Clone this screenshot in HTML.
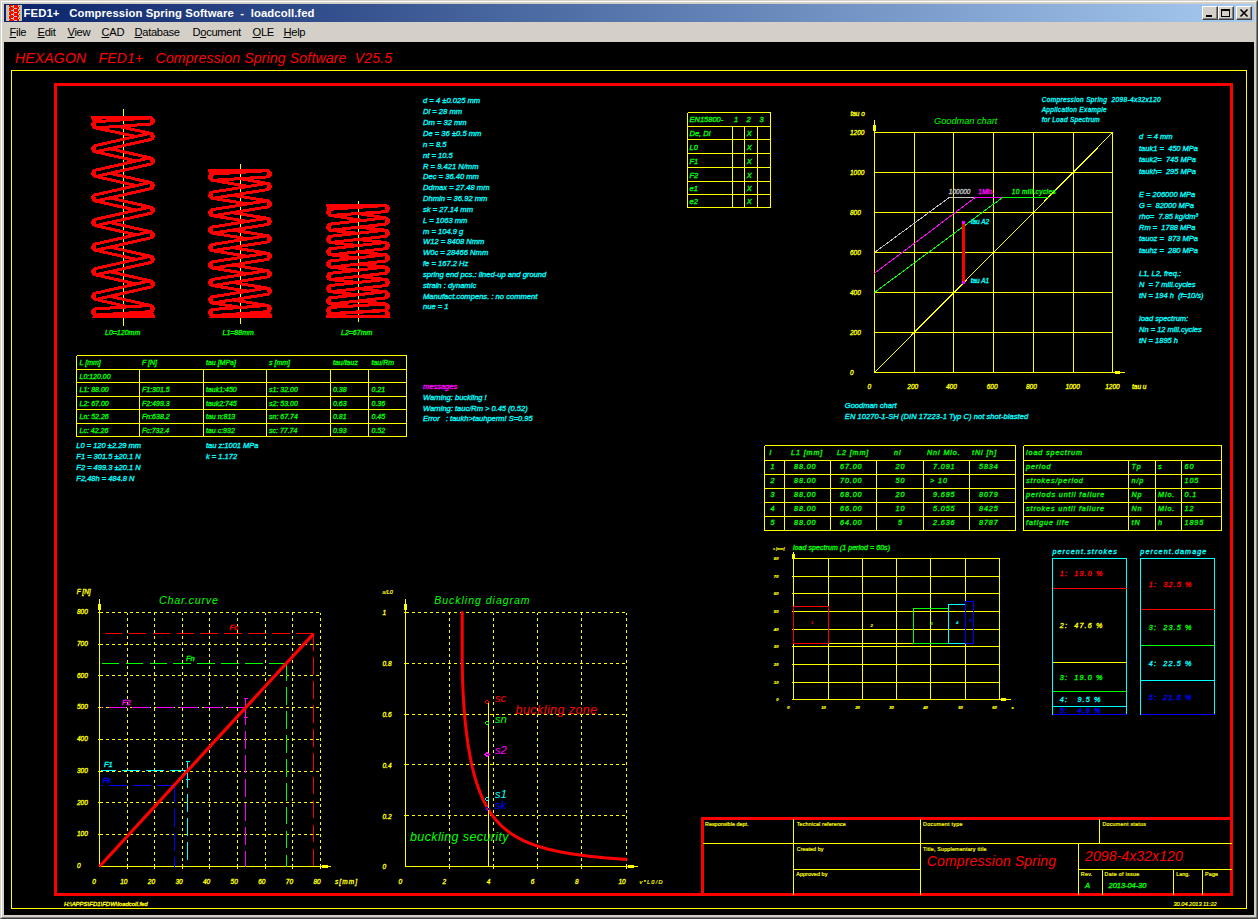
<!DOCTYPE html>
<html><head><meta charset="utf-8"><title>FED1+ Compression Spring Software - loadcoll.fed</title>
<style>
html,body{margin:0;padding:0;}
body{width:1258px;height:919px;overflow:hidden;background:#d4d0c8;position:relative;font-family:"Liberation Sans", sans-serif;}
#win{position:absolute;left:0;top:0;width:1256px;height:917px;border-top:1px solid #d4d0c8;border-left:1px solid #d4d0c8;border-right:1px solid #404040;border-bottom:1px solid #404040;}
#win2{position:absolute;left:1px;top:1px;width:1254px;height:915px;border-top:1px solid #fff;border-left:1px solid #fff;border-right:1px solid #808080;border-bottom:1px solid #808080;}
#title{position:absolute;left:4px;top:4px;width:1250px;height:18px;background:linear-gradient(to right,#0a246a 0%,#a6caf0 100%);}
#ttext{position:absolute;left:23.5px;top:4px;height:18px;line-height:18px;color:#fff;font-weight:bold;font-size:11.3px;white-space:pre;letter-spacing:0.1px;}
#menu{position:absolute;left:4px;top:22px;width:1250px;height:20px;background:#d4d0c8;}
.mi{position:absolute;top:23px;height:18px;line-height:18px;font-size:11.2px;color:#000;white-space:pre;letter-spacing:-0.33px;}
.mi u{text-decoration:underline;text-underline-offset:1px;}
#canvas{position:absolute;left:4px;top:42px;width:1250px;height:873px;background:#000;}
.btn{position:absolute;top:6px;width:14px;height:12px;background:#d4d0c8;border:1px solid;border-color:#fff #404040 #404040 #fff;box-shadow:inset -1px -1px 0 #808080;}
svg{position:absolute;left:0;top:0;}
svg text{font-family:"Liberation Sans", sans-serif;font-style:italic;}
</style></head><body>
<div id="win"></div><div id="win2"></div>
<div id="title"></div>
<svg width="22" height="22" viewBox="0 0 22 22" shape-rendering="crispEdges">
<rect x="6" y="5" width="16" height="16" fill="#c0c0c0"/><rect x="8" y="5" width="10" height="1" fill="#ff0000"/><rect x="8" y="5" width="1" height="1" fill="#ffff00"/><rect x="13" y="5" width="1" height="1" fill="#ffff00"/><rect x="9" y="6" width="11" height="1" fill="#ff0000"/><rect x="18" y="6" width="1" height="1" fill="#ffff00"/><rect x="11" y="6" width="3" height="1" fill="#a8c8c8"/><rect x="10" y="7" width="10" height="1" fill="#ff0000"/><rect x="13" y="7" width="1" height="1" fill="#ffff00"/><rect x="19" y="7" width="1" height="1" fill="#ffff00"/><rect x="8" y="8" width="11" height="1" fill="#ff0000"/><rect x="8" y="8" width="1" height="1" fill="#ffff00"/><rect x="14" y="8" width="3" height="1" fill="#a8c8c8"/><rect x="8" y="9" width="10" height="1" fill="#ff0000"/><rect x="8" y="9" width="1" height="1" fill="#ffff00"/><rect x="13" y="9" width="1" height="1" fill="#ffff00"/><rect x="9" y="10" width="11" height="1" fill="#ff0000"/><rect x="18" y="10" width="1" height="1" fill="#ffff00"/><rect x="11" y="10" width="3" height="1" fill="#a8c8c8"/><rect x="10" y="11" width="10" height="1" fill="#ff0000"/><rect x="13" y="11" width="1" height="1" fill="#ffff00"/><rect x="19" y="11" width="1" height="1" fill="#ffff00"/><rect x="8" y="12" width="11" height="1" fill="#ff0000"/><rect x="8" y="12" width="1" height="1" fill="#ffff00"/><rect x="14" y="12" width="3" height="1" fill="#a8c8c8"/><rect x="8" y="13" width="10" height="1" fill="#ff0000"/><rect x="8" y="13" width="1" height="1" fill="#ffff00"/><rect x="13" y="13" width="1" height="1" fill="#ffff00"/><rect x="9" y="14" width="11" height="1" fill="#ff0000"/><rect x="18" y="14" width="1" height="1" fill="#ffff00"/><rect x="11" y="14" width="3" height="1" fill="#a8c8c8"/><rect x="10" y="15" width="10" height="1" fill="#ff0000"/><rect x="13" y="15" width="1" height="1" fill="#ffff00"/><rect x="19" y="15" width="1" height="1" fill="#ffff00"/><rect x="8" y="16" width="11" height="1" fill="#ff0000"/><rect x="8" y="16" width="1" height="1" fill="#ffff00"/><rect x="14" y="16" width="3" height="1" fill="#a8c8c8"/><rect x="8" y="17" width="10" height="1" fill="#ff0000"/><rect x="8" y="17" width="1" height="1" fill="#ffff00"/><rect x="13" y="17" width="1" height="1" fill="#ffff00"/><rect x="9" y="18" width="11" height="1" fill="#ff0000"/><rect x="18" y="18" width="1" height="1" fill="#ffff00"/><rect x="11" y="18" width="3" height="1" fill="#a8c8c8"/><rect x="10" y="19" width="10" height="1" fill="#ff0000"/><rect x="13" y="19" width="1" height="1" fill="#ffff00"/><rect x="19" y="19" width="1" height="1" fill="#ffff00"/><rect x="8" y="20" width="11" height="1" fill="#ff0000"/><rect x="8" y="20" width="1" height="1" fill="#ffff00"/><rect x="14" y="20" width="3" height="1" fill="#a8c8c8"/>
</svg>
<div id="ttext">FED1+   Compression Spring Software  -  loadcoll.fed</div>
<div class="btn" style="left:1202px"></div><div class="btn" style="left:1218px"></div><div class="btn" style="left:1236px"></div>
<svg width="1258" height="24" viewBox="0 0 1258 24" shape-rendering="crispEdges">
<rect x="1206" y="15" width="6" height="2" fill="#000"/>
<rect x="1221.5" y="9.500" width="8" height="7" fill="none" stroke="#000"/><rect x="1221" y="9" width="9" height="2" fill="#000"/>
<path d="M1240.500 9.500 L1247.500 16.500 M1247.500 9.500 L1240.500 16.500" stroke="#000" stroke-width="1.600" shape-rendering="geometricPrecision"/>
</svg>
<div id="menu"></div>
<span class="mi" style="left:9.5px"><u>F</u>ile</span><span class="mi" style="left:37.5px"><u>E</u>dit</span><span class="mi" style="left:67.5px"><u>V</u>iew</span><span class="mi" style="left:101.5px"><u>C</u>AD</span><span class="mi" style="left:134.5px"><u>D</u>atabase</span><span class="mi" style="left:192.5px">D<u>o</u>cument</span><span class="mi" style="left:252.5px"><u>O</u>LE</span><span class="mi" style="left:283.5px"><u>H</u>elp</span>
<div id="canvas"></div>
<svg width="1258" height="919" viewBox="0 0 1258 919" shape-rendering="crispEdges">
<rect x="11.5" y="70.5" width="1235.0" height="838.0" stroke="#ffff00" stroke-width="1" fill="none"/>
<rect x="55.5" y="84.5" width="1176.0" height="810.0" stroke="#ff0000" stroke-width="3" fill="none"/>
<text x="15.0" y="63.0" fill="#ff0000" stroke="#ff0000" stroke-width="0.00" font-size="14.00" textLength="377.0" lengthAdjust="spacing" xml:space="preserve">HEXAGON   FED1+   Compression Spring Software  V25.5</text>
<text x="64.0" y="906.0" fill="#ffff00" stroke="#ffff00" stroke-width="0.32" font-size="6.00" textLength="83.7" lengthAdjust="spacing" xml:space="preserve">H:\APPS\FD1\FDW\loadcoll.fed</text>
<text x="1173.5" y="906.2" fill="#ffff00" stroke="#ffff00" stroke-width="0.20" font-size="5.60" textLength="43.2" lengthAdjust="spacing" xml:space="preserve">30.04.2013 11:22</text>
<line x1="123.5" y1="109.0" x2="123.5" y2="326.0" stroke="#ffff00" stroke-width="1"/>
<clipPath id="c123"><rect x="83.5" y="116.0" width="80" height="202.0"/></clipPath>
<g clip-path="url(#c123)" fill="none">
<mask id="mbc123" maskUnits="userSpaceOnUse" x="78.5" y="106.0" width="90" height="222.0"><rect x="78.5" y="106.0" width="90" height="222.0" fill="#fff"/><path d="M95.8 117.5L150.3 121.0M95.8 124.8L150.3 136.4M95.8 148.7L150.3 161.0M95.8 173.3L150.3 185.6M95.8 197.9L150.3 210.2M95.8 222.5L150.3 234.8M95.8 247.1L150.3 259.4M95.8 271.7L150.3 284.0M95.8 296.3L150.3 308.6M95.8 312.0L150.3 316.5" stroke="#000" stroke-width="3.2" stroke-linecap="butt"/><path d="M150.3 121.0L95.8 124.8M150.3 136.4L95.8 148.7M150.3 161.0L95.8 173.3M150.3 185.6L95.8 197.9M150.3 210.2L95.8 222.5M150.3 234.8L95.8 247.1M150.3 259.4L95.8 271.7M150.3 284.0L95.8 296.3M150.3 308.6L95.8 312.0M150.3 316.5L95.8 320.0" stroke="#000" stroke-width="9.2" stroke-linecap="round"/></mask>
<mask id="mfc123" maskUnits="userSpaceOnUse" x="78.5" y="106.0" width="90" height="222.0"><rect x="78.5" y="106.0" width="90" height="222.0" fill="#fff"/><path d="M150.3 121.0L95.8 124.8M150.3 136.4L95.8 148.7M150.3 161.0L95.8 173.3M150.3 185.6L95.8 197.9M150.3 210.2L95.8 222.5M150.3 234.8L95.8 247.1M150.3 259.4L95.8 271.7M150.3 284.0L95.8 296.3M150.3 308.6L95.8 312.0M150.3 316.5L95.8 320.0" stroke="#000" stroke-width="3.2" stroke-linecap="butt"/></mask>
<path d="M95.8 117.5L150.3 121.0M95.8 124.8L150.3 136.4M95.8 148.7L150.3 161.0M95.8 173.3L150.3 185.6M95.8 197.9L150.3 210.2M95.8 222.5L150.3 234.8M95.8 247.1L150.3 259.4M95.8 271.7L150.3 284.0M95.8 296.3L150.3 308.6M95.8 312.0L150.3 316.5" stroke="#ff0000" stroke-width="9.2" stroke-linecap="round" mask="url(#mbc123)"/>
<path d="M150.3 121.0L95.8 124.8M150.3 136.4L95.8 148.7M150.3 161.0L95.8 173.3M150.3 185.6L95.8 197.9M150.3 210.2L95.8 222.5M150.3 234.8L95.8 247.1M150.3 259.4L95.8 271.7M150.3 284.0L95.8 296.3M150.3 308.6L95.8 312.0M150.3 316.5L95.8 320.0" stroke="#ff0000" stroke-width="9.2" stroke-linecap="round" mask="url(#mfc123)"/>
</g>
<line x1="91.5" y1="117.5" x2="151.5" y2="117.5" stroke="#ff0000" stroke-width="3"/>
<line x1="94.5" y1="316.5" x2="154.5" y2="316.5" stroke="#ff0000" stroke-width="3"/>
<text x="105.0" y="334.5" fill="#00ff00" stroke="#00ff00" stroke-width="0.32" font-size="7.00" xml:space="preserve">L0=120mm</text>
<line x1="240.5" y1="164.0" x2="240.5" y2="324.0" stroke="#ffff00" stroke-width="1"/>
<clipPath id="c240"><rect x="200.5" y="169.0" width="80" height="149.0"/></clipPath>
<g clip-path="url(#c240)" fill="none">
<mask id="mbc240" maskUnits="userSpaceOnUse" x="195.5" y="159.0" width="90" height="169.0"><rect x="195.5" y="159.0" width="90" height="169.0" fill="#fff"/><path d="M212.8 170.5L267.3 173.8M212.8 177.2L267.3 186.5M212.8 195.2L267.3 203.9M212.8 212.7L267.3 221.4M212.8 230.1L267.3 238.8M212.8 247.6L267.3 256.3M212.8 265.0L267.3 273.8M212.8 282.5L267.3 291.2M212.8 299.9L267.3 308.6M212.8 312.6L267.3 316.2" stroke="#000" stroke-width="3.2" stroke-linecap="butt"/><path d="M267.3 173.8L212.8 177.2M267.3 186.5L212.8 195.2M267.3 203.9L212.8 212.7M267.3 221.4L212.8 230.1M267.3 238.8L212.8 247.6M267.3 256.3L212.8 265.0M267.3 273.8L212.8 282.5M267.3 291.2L212.8 299.9M267.3 308.6L212.8 312.6M267.3 316.2L212.8 320.0" stroke="#000" stroke-width="9.2" stroke-linecap="round"/></mask>
<mask id="mfc240" maskUnits="userSpaceOnUse" x="195.5" y="159.0" width="90" height="169.0"><rect x="195.5" y="159.0" width="90" height="169.0" fill="#fff"/><path d="M267.3 173.8L212.8 177.2M267.3 186.5L212.8 195.2M267.3 203.9L212.8 212.7M267.3 221.4L212.8 230.1M267.3 238.8L212.8 247.6M267.3 256.3L212.8 265.0M267.3 273.8L212.8 282.5M267.3 291.2L212.8 299.9M267.3 308.6L212.8 312.6M267.3 316.2L212.8 320.0" stroke="#000" stroke-width="3.2" stroke-linecap="butt"/></mask>
<path d="M212.8 170.5L267.3 173.8M212.8 177.2L267.3 186.5M212.8 195.2L267.3 203.9M212.8 212.7L267.3 221.4M212.8 230.1L267.3 238.8M212.8 247.6L267.3 256.3M212.8 265.0L267.3 273.8M212.8 282.5L267.3 291.2M212.8 299.9L267.3 308.6M212.8 312.6L267.3 316.2" stroke="#ff0000" stroke-width="9.2" stroke-linecap="round" mask="url(#mbc240)"/>
<path d="M267.3 173.8L212.8 177.2M267.3 186.5L212.8 195.2M267.3 203.9L212.8 212.7M267.3 221.4L212.8 230.1M267.3 238.8L212.8 247.6M267.3 256.3L212.8 265.0M267.3 273.8L212.8 282.5M267.3 291.2L212.8 299.9M267.3 308.6L212.8 312.6M267.3 316.2L212.8 320.0" stroke="#ff0000" stroke-width="9.2" stroke-linecap="round" mask="url(#mfc240)"/>
</g>
<line x1="208.5" y1="170.5" x2="268.5" y2="170.5" stroke="#ff0000" stroke-width="3"/>
<line x1="211.5" y1="316.5" x2="271.5" y2="316.5" stroke="#ff0000" stroke-width="3"/>
<text x="222.5" y="334.5" fill="#00ff00" stroke="#00ff00" stroke-width="0.32" font-size="7.00" xml:space="preserve">L1=88mm</text>
<line x1="358.5" y1="200.5" x2="358.5" y2="322.0" stroke="#ffff00" stroke-width="1"/>
<clipPath id="c358"><rect x="318.5" y="204.0" width="80" height="114.0"/></clipPath>
<g clip-path="url(#c358)" fill="none">
<mask id="mbc358" maskUnits="userSpaceOnUse" x="313.5" y="194.0" width="90" height="134.0"><rect x="313.5" y="194.0" width="90" height="134.0" fill="#fff"/><path d="M330.8 205.5L385.3 208.6M330.8 212.3L385.3 221.0M330.8 227.2L385.3 233.3M330.8 239.4L385.3 245.6M330.8 251.8L385.3 257.9M330.8 264.1L385.3 270.2M330.8 276.4L385.3 282.5M330.8 288.6L385.3 294.8M330.8 300.9L385.3 307.1M330.8 310.5L385.3 313.8M330.8 317.0L385.3 320.0" stroke="#000" stroke-width="3.2" stroke-linecap="butt"/><path d="M385.3 208.6L330.8 212.3M385.3 221.0L330.8 227.2M385.3 233.3L330.8 239.4M385.3 245.6L330.8 251.8M385.3 257.9L330.8 264.1M385.3 270.2L330.8 276.4M385.3 282.5L330.8 288.6M385.3 294.8L330.8 300.9M385.3 307.1L330.8 310.5M385.3 313.8L330.8 317.0" stroke="#000" stroke-width="9.2" stroke-linecap="round"/></mask>
<mask id="mfc358" maskUnits="userSpaceOnUse" x="313.5" y="194.0" width="90" height="134.0"><rect x="313.5" y="194.0" width="90" height="134.0" fill="#fff"/><path d="M385.3 208.6L330.8 212.3M385.3 221.0L330.8 227.2M385.3 233.3L330.8 239.4M385.3 245.6L330.8 251.8M385.3 257.9L330.8 264.1M385.3 270.2L330.8 276.4M385.3 282.5L330.8 288.6M385.3 294.8L330.8 300.9M385.3 307.1L330.8 310.5M385.3 313.8L330.8 317.0" stroke="#000" stroke-width="3.2" stroke-linecap="butt"/></mask>
<path d="M330.8 205.5L385.3 208.6M330.8 212.3L385.3 221.0M330.8 227.2L385.3 233.3M330.8 239.4L385.3 245.6M330.8 251.8L385.3 257.9M330.8 264.1L385.3 270.2M330.8 276.4L385.3 282.5M330.8 288.6L385.3 294.8M330.8 300.9L385.3 307.1M330.8 310.5L385.3 313.8M330.8 317.0L385.3 320.0" stroke="#ff0000" stroke-width="9.2" stroke-linecap="round" mask="url(#mbc358)"/>
<path d="M385.3 208.6L330.8 212.3M385.3 221.0L330.8 227.2M385.3 233.3L330.8 239.4M385.3 245.6L330.8 251.8M385.3 257.9L330.8 264.1M385.3 270.2L330.8 276.4M385.3 282.5L330.8 288.6M385.3 294.8L330.8 300.9M385.3 307.1L330.8 310.5M385.3 313.8L330.8 317.0" stroke="#ff0000" stroke-width="9.2" stroke-linecap="round" mask="url(#mfc358)"/>
</g>
<line x1="326.5" y1="205.5" x2="386.5" y2="205.5" stroke="#ff0000" stroke-width="3"/>
<line x1="329.5" y1="316.5" x2="389.5" y2="316.5" stroke="#ff0000" stroke-width="3"/>
<text x="341.0" y="334.5" fill="#00ff00" stroke="#00ff00" stroke-width="0.32" font-size="7.00" xml:space="preserve">L2=67mm</text>
<text x="423.0" y="103.4" fill="#00ffff" stroke="#00ffff" stroke-width="0.32" font-size="7.60" xml:space="preserve">d = 4 ±0.025 mm</text>
<text x="423.0" y="114.3" fill="#00ffff" stroke="#00ffff" stroke-width="0.32" font-size="7.60" xml:space="preserve">Di = 28 mm</text>
<text x="423.0" y="125.1" fill="#00ffff" stroke="#00ffff" stroke-width="0.32" font-size="7.60" xml:space="preserve">Dm = 32 mm</text>
<text x="423.0" y="136.0" fill="#00ffff" stroke="#00ffff" stroke-width="0.32" font-size="7.60" xml:space="preserve">De = 36 ±0.5 mm</text>
<text x="423.0" y="146.8" fill="#00ffff" stroke="#00ffff" stroke-width="0.32" font-size="7.60" xml:space="preserve">n = 8.5</text>
<text x="423.0" y="157.6" fill="#00ffff" stroke="#00ffff" stroke-width="0.32" font-size="7.60" xml:space="preserve">nt = 10.5</text>
<text x="423.0" y="168.5" fill="#00ffff" stroke="#00ffff" stroke-width="0.32" font-size="7.60" xml:space="preserve">R = 9.421 N/mm</text>
<text x="423.0" y="179.3" fill="#00ffff" stroke="#00ffff" stroke-width="0.32" font-size="7.60" xml:space="preserve">Dec = 36.40 mm</text>
<text x="423.0" y="190.2" fill="#00ffff" stroke="#00ffff" stroke-width="0.32" font-size="7.60" xml:space="preserve">Ddmax = 27.48 mm</text>
<text x="423.0" y="201.0" fill="#00ffff" stroke="#00ffff" stroke-width="0.32" font-size="7.60" xml:space="preserve">Dhmin = 36.92 mm</text>
<text x="423.0" y="211.8" fill="#00ffff" stroke="#00ffff" stroke-width="0.32" font-size="7.60" xml:space="preserve">sk = 27.14 mm</text>
<text x="423.0" y="222.7" fill="#00ffff" stroke="#00ffff" stroke-width="0.32" font-size="7.60" xml:space="preserve">L = 1063 mm</text>
<text x="423.0" y="233.5" fill="#00ffff" stroke="#00ffff" stroke-width="0.32" font-size="7.60" xml:space="preserve">m = 104.9 g</text>
<text x="423.0" y="244.4" fill="#00ffff" stroke="#00ffff" stroke-width="0.32" font-size="7.60" xml:space="preserve">W12 = 8408 Nmm</text>
<text x="423.0" y="255.2" fill="#00ffff" stroke="#00ffff" stroke-width="0.32" font-size="7.60" xml:space="preserve">W0c = 28466 Nmm</text>
<text x="423.0" y="266.0" fill="#00ffff" stroke="#00ffff" stroke-width="0.32" font-size="7.60" xml:space="preserve">fe = 167.2 Hz</text>
<text x="423.0" y="276.9" fill="#00ffff" stroke="#00ffff" stroke-width="0.32" font-size="7.60" xml:space="preserve">spring end pcs.: lined-up and ground</text>
<text x="423.0" y="287.7" fill="#00ffff" stroke="#00ffff" stroke-width="0.32" font-size="7.60" xml:space="preserve">strain : dynamic</text>
<text x="423.0" y="298.6" fill="#00ffff" stroke="#00ffff" stroke-width="0.32" font-size="7.60" xml:space="preserve">Manufact.compens. : no comment</text>
<text x="423.0" y="309.4" fill="#00ffff" stroke="#00ffff" stroke-width="0.32" font-size="7.60" xml:space="preserve">nue = 1</text>
<text x="423.0" y="389.1" fill="#ff00ff" stroke="#ff00ff" stroke-width="0.32" font-size="7.50" xml:space="preserve">messages</text>
<text x="423.0" y="399.7" fill="#00ffff" stroke="#00ffff" stroke-width="0.32" font-size="7.50" xml:space="preserve">Warning: buckling !</text>
<text x="423.0" y="410.7" fill="#00ffff" stroke="#00ffff" stroke-width="0.32" font-size="7.50" xml:space="preserve">Warning: tauc/Rm &gt; 0.45 (0.52)</text>
<text x="423.0" y="421.1" fill="#00ffff" stroke="#00ffff" stroke-width="0.32" font-size="7.50" xml:space="preserve">Error   : taukh&gt;tauhperm! S=0.95</text>
<line x1="687.5" y1="112.5" x2="770.5" y2="112.5" stroke="#ffff00" stroke-width="1"/>
<line x1="687.5" y1="126.5" x2="770.5" y2="126.5" stroke="#ffff00" stroke-width="1"/>
<line x1="687.5" y1="139.5" x2="770.5" y2="139.5" stroke="#ffff00" stroke-width="1"/>
<line x1="687.5" y1="153.5" x2="770.5" y2="153.5" stroke="#ffff00" stroke-width="1"/>
<line x1="687.5" y1="167.5" x2="770.5" y2="167.5" stroke="#ffff00" stroke-width="1"/>
<line x1="687.5" y1="181.5" x2="770.5" y2="181.5" stroke="#ffff00" stroke-width="1"/>
<line x1="687.5" y1="194.5" x2="770.5" y2="194.5" stroke="#ffff00" stroke-width="1"/>
<line x1="687.5" y1="207.5" x2="770.5" y2="207.5" stroke="#ffff00" stroke-width="1"/>
<line x1="687.5" y1="112.5" x2="687.5" y2="207.5" stroke="#ffff00" stroke-width="1"/>
<line x1="770.5" y1="112.5" x2="770.5" y2="207.5" stroke="#ffff00" stroke-width="1"/>
<line x1="732.5" y1="126.5" x2="732.5" y2="207.5" stroke="#ffff00" stroke-width="1"/>
<line x1="744.5" y1="126.5" x2="744.5" y2="207.5" stroke="#ffff00" stroke-width="1"/>
<line x1="757.5" y1="126.5" x2="757.5" y2="207.5" stroke="#ffff00" stroke-width="1"/>
<text x="689.5" y="122.2" fill="#00ff00" stroke="#00ff00" stroke-width="0.32" font-size="7.50" xml:space="preserve">EN15800-</text>
<text x="734.0" y="122.2" fill="#00ff00" stroke="#00ff00" stroke-width="0.32" font-size="7.50" xml:space="preserve">1</text>
<text x="746.5" y="122.2" fill="#00ff00" stroke="#00ff00" stroke-width="0.32" font-size="7.50" xml:space="preserve">2</text>
<text x="759.5" y="122.2" fill="#00ff00" stroke="#00ff00" stroke-width="0.32" font-size="7.50" xml:space="preserve">3</text>
<text x="689.5" y="136.0" fill="#00ff00" stroke="#00ff00" stroke-width="0.32" font-size="7.50" xml:space="preserve">De, Di</text>
<text x="746.8" y="136.0" fill="#00ff00" stroke="#00ff00" stroke-width="0.32" font-size="7.50" xml:space="preserve">X</text>
<text x="689.5" y="149.5" fill="#00ff00" stroke="#00ff00" stroke-width="0.32" font-size="7.50" xml:space="preserve">L0</text>
<text x="746.8" y="149.5" fill="#00ff00" stroke="#00ff00" stroke-width="0.32" font-size="7.50" xml:space="preserve">X</text>
<text x="689.5" y="163.5" fill="#00ff00" stroke="#00ff00" stroke-width="0.32" font-size="7.50" xml:space="preserve">F1</text>
<text x="746.8" y="163.5" fill="#00ff00" stroke="#00ff00" stroke-width="0.32" font-size="7.50" xml:space="preserve">X</text>
<text x="689.5" y="177.5" fill="#00ff00" stroke="#00ff00" stroke-width="0.32" font-size="7.50" xml:space="preserve">F2</text>
<text x="746.8" y="177.5" fill="#00ff00" stroke="#00ff00" stroke-width="0.32" font-size="7.50" xml:space="preserve">X</text>
<text x="689.5" y="191.0" fill="#00ff00" stroke="#00ff00" stroke-width="0.32" font-size="7.50" xml:space="preserve">e1</text>
<text x="746.8" y="191.0" fill="#00ff00" stroke="#00ff00" stroke-width="0.32" font-size="7.50" xml:space="preserve">X</text>
<text x="689.5" y="204.0" fill="#00ff00" stroke="#00ff00" stroke-width="0.32" font-size="7.50" xml:space="preserve">e2</text>
<text x="746.8" y="204.0" fill="#00ff00" stroke="#00ff00" stroke-width="0.32" font-size="7.50" xml:space="preserve">X</text>
<line x1="76.5" y1="355.5" x2="406.5" y2="355.5" stroke="#ffff00" stroke-width="1"/>
<line x1="76.5" y1="369.5" x2="406.5" y2="369.5" stroke="#ffff00" stroke-width="1"/>
<line x1="76.5" y1="382.5" x2="406.5" y2="382.5" stroke="#ffff00" stroke-width="1"/>
<line x1="76.5" y1="396.5" x2="406.5" y2="396.5" stroke="#ffff00" stroke-width="1"/>
<line x1="76.5" y1="409.5" x2="406.5" y2="409.5" stroke="#ffff00" stroke-width="1"/>
<line x1="76.5" y1="423.5" x2="406.5" y2="423.5" stroke="#ffff00" stroke-width="1"/>
<line x1="76.5" y1="436.5" x2="406.5" y2="436.5" stroke="#ffff00" stroke-width="1"/>
<line x1="76.5" y1="355.5" x2="76.5" y2="436.5" stroke="#ffff00" stroke-width="1"/>
<line x1="406.5" y1="355.5" x2="406.5" y2="436.5" stroke="#ffff00" stroke-width="1"/>
<line x1="139.5" y1="369.5" x2="139.5" y2="436.5" stroke="#ffff00" stroke-width="1"/>
<line x1="203.5" y1="369.5" x2="203.5" y2="436.5" stroke="#ffff00" stroke-width="1"/>
<line x1="266.5" y1="369.5" x2="266.5" y2="436.5" stroke="#ffff00" stroke-width="1"/>
<line x1="330.5" y1="369.5" x2="330.5" y2="436.5" stroke="#ffff00" stroke-width="1"/>
<line x1="368.5" y1="369.5" x2="368.5" y2="436.5" stroke="#ffff00" stroke-width="1"/>
<text x="79.5" y="365.4" fill="#00ff00" stroke="#00ff00" stroke-width="0.32" font-size="7.00" xml:space="preserve">L [mm]</text>
<text x="142.0" y="365.4" fill="#00ff00" stroke="#00ff00" stroke-width="0.32" font-size="7.00" xml:space="preserve">F [N]</text>
<text x="206.0" y="365.4" fill="#00ff00" stroke="#00ff00" stroke-width="0.32" font-size="7.00" xml:space="preserve">tau [MPa]</text>
<text x="269.0" y="365.4" fill="#00ff00" stroke="#00ff00" stroke-width="0.32" font-size="7.00" xml:space="preserve">s [mm]</text>
<text x="333.0" y="365.4" fill="#00ff00" stroke="#00ff00" stroke-width="0.32" font-size="7.00" xml:space="preserve">tau/tauz</text>
<text x="371.5" y="365.4" fill="#00ff00" stroke="#00ff00" stroke-width="0.32" font-size="7.00" xml:space="preserve">tau/Rm</text>
<text x="79.5" y="378.9" fill="#00ff00" stroke="#00ff00" stroke-width="0.32" font-size="7.00" xml:space="preserve">L0:120.00</text>
<text x="79.5" y="392.4" fill="#00ff00" stroke="#00ff00" stroke-width="0.32" font-size="7.00" xml:space="preserve">L1: 88.00</text>
<text x="142.0" y="392.4" fill="#00ff00" stroke="#00ff00" stroke-width="0.32" font-size="7.00" xml:space="preserve">F1:301.5</text>
<text x="206.0" y="392.4" fill="#00ff00" stroke="#00ff00" stroke-width="0.32" font-size="7.00" xml:space="preserve">tauk1:450</text>
<text x="269.0" y="392.4" fill="#00ff00" stroke="#00ff00" stroke-width="0.32" font-size="7.00" xml:space="preserve">s1: 32.00</text>
<text x="333.0" y="392.4" fill="#00ff00" stroke="#00ff00" stroke-width="0.32" font-size="7.00" xml:space="preserve">0.38</text>
<text x="371.5" y="392.4" fill="#00ff00" stroke="#00ff00" stroke-width="0.32" font-size="7.00" xml:space="preserve">0.21</text>
<text x="79.5" y="405.9" fill="#00ff00" stroke="#00ff00" stroke-width="0.32" font-size="7.00" xml:space="preserve">L2: 67.00</text>
<text x="142.0" y="405.9" fill="#00ff00" stroke="#00ff00" stroke-width="0.32" font-size="7.00" xml:space="preserve">F2:499.3</text>
<text x="206.0" y="405.9" fill="#00ff00" stroke="#00ff00" stroke-width="0.32" font-size="7.00" xml:space="preserve">tauk2:745</text>
<text x="269.0" y="405.9" fill="#00ff00" stroke="#00ff00" stroke-width="0.32" font-size="7.00" xml:space="preserve">s2: 53.00</text>
<text x="333.0" y="405.9" fill="#00ff00" stroke="#00ff00" stroke-width="0.32" font-size="7.00" xml:space="preserve">0.63</text>
<text x="371.5" y="405.9" fill="#00ff00" stroke="#00ff00" stroke-width="0.32" font-size="7.00" xml:space="preserve">0.36</text>
<text x="79.5" y="419.4" fill="#00ff00" stroke="#00ff00" stroke-width="0.32" font-size="7.00" xml:space="preserve">Ln: 52.26</text>
<text x="142.0" y="419.4" fill="#00ff00" stroke="#00ff00" stroke-width="0.32" font-size="7.00" xml:space="preserve">Fn:638.2</text>
<text x="206.0" y="419.4" fill="#00ff00" stroke="#00ff00" stroke-width="0.32" font-size="7.00" xml:space="preserve">tau n:813</text>
<text x="269.0" y="419.4" fill="#00ff00" stroke="#00ff00" stroke-width="0.32" font-size="7.00" xml:space="preserve">sn: 67.74</text>
<text x="333.0" y="419.4" fill="#00ff00" stroke="#00ff00" stroke-width="0.32" font-size="7.00" xml:space="preserve">0.81</text>
<text x="371.5" y="419.4" fill="#00ff00" stroke="#00ff00" stroke-width="0.32" font-size="7.00" xml:space="preserve">0.45</text>
<text x="79.5" y="432.9" fill="#00ff00" stroke="#00ff00" stroke-width="0.32" font-size="7.00" xml:space="preserve">Lc: 42.26</text>
<text x="142.0" y="432.9" fill="#00ff00" stroke="#00ff00" stroke-width="0.32" font-size="7.00" xml:space="preserve">Fc:732.4</text>
<text x="206.0" y="432.9" fill="#00ff00" stroke="#00ff00" stroke-width="0.32" font-size="7.00" xml:space="preserve">tau c:932</text>
<text x="269.0" y="432.9" fill="#00ff00" stroke="#00ff00" stroke-width="0.32" font-size="7.00" xml:space="preserve">sc: 77.74</text>
<text x="333.0" y="432.9" fill="#00ff00" stroke="#00ff00" stroke-width="0.32" font-size="7.00" xml:space="preserve">0.93</text>
<text x="371.5" y="432.9" fill="#00ff00" stroke="#00ff00" stroke-width="0.32" font-size="7.00" xml:space="preserve">0.52</text>
<text x="76.3" y="448.1" fill="#00ffff" stroke="#00ffff" stroke-width="0.32" font-size="7.50" xml:space="preserve">L0 = 120 ±2.29 mm</text>
<text x="76.3" y="458.9" fill="#00ffff" stroke="#00ffff" stroke-width="0.32" font-size="7.50" xml:space="preserve">F1 = 301.5 ±20.1 N</text>
<text x="76.3" y="469.9" fill="#00ffff" stroke="#00ffff" stroke-width="0.32" font-size="7.50" xml:space="preserve">F2 = 499.3 ±20.1 N</text>
<text x="76.3" y="480.9" fill="#00ffff" stroke="#00ffff" stroke-width="0.32" font-size="7.50" xml:space="preserve">F2,48h = 484.8 N</text>
<text x="206.0" y="448.1" fill="#00ffff" stroke="#00ffff" stroke-width="0.32" font-size="7.50" xml:space="preserve">tau z:1001 MPa</text>
<text x="206.0" y="458.9" fill="#00ffff" stroke="#00ffff" stroke-width="0.32" font-size="7.50" xml:space="preserve">k = 1.172</text>
<line x1="764.5" y1="445.5" x2="1015.5" y2="445.5" stroke="#ffff00" stroke-width="1"/>
<line x1="764.5" y1="460.5" x2="1015.5" y2="460.5" stroke="#ffff00" stroke-width="1"/>
<line x1="764.5" y1="474.5" x2="1015.5" y2="474.5" stroke="#ffff00" stroke-width="1"/>
<line x1="764.5" y1="488.5" x2="1015.5" y2="488.5" stroke="#ffff00" stroke-width="1"/>
<line x1="764.5" y1="502.5" x2="1015.5" y2="502.5" stroke="#ffff00" stroke-width="1"/>
<line x1="764.5" y1="516.5" x2="1015.5" y2="516.5" stroke="#ffff00" stroke-width="1"/>
<line x1="764.5" y1="530.5" x2="1015.5" y2="530.5" stroke="#ffff00" stroke-width="1"/>
<line x1="764.5" y1="445.5" x2="764.5" y2="530.5" stroke="#ffff00" stroke-width="1"/>
<line x1="1015.5" y1="445.5" x2="1015.5" y2="530.5" stroke="#ffff00" stroke-width="1"/>
<line x1="784.5" y1="460.5" x2="784.5" y2="530.5" stroke="#ffff00" stroke-width="1"/>
<line x1="830.5" y1="460.5" x2="830.5" y2="530.5" stroke="#ffff00" stroke-width="1"/>
<line x1="876.5" y1="460.5" x2="876.5" y2="530.5" stroke="#ffff00" stroke-width="1"/>
<line x1="923.5" y1="460.5" x2="923.5" y2="530.5" stroke="#ffff00" stroke-width="1"/>
<line x1="969.5" y1="460.5" x2="969.5" y2="530.5" stroke="#ffff00" stroke-width="1"/>
<text x="769.5" y="454.6" fill="#00ff00" stroke="#00ff00" stroke-width="0.32" font-size="7.20" letter-spacing="0.90" xml:space="preserve">i</text>
<text x="791.0" y="454.6" fill="#00ff00" stroke="#00ff00" stroke-width="0.32" font-size="7.20" letter-spacing="0.90" xml:space="preserve">L1 [mm]</text>
<text x="837.0" y="454.6" fill="#00ff00" stroke="#00ff00" stroke-width="0.32" font-size="7.20" letter-spacing="0.90" xml:space="preserve">L2 [mm]</text>
<text x="894.0" y="454.6" fill="#00ff00" stroke="#00ff00" stroke-width="0.32" font-size="7.20" letter-spacing="0.90" xml:space="preserve">ni</text>
<text x="927.0" y="454.6" fill="#00ff00" stroke="#00ff00" stroke-width="0.32" font-size="7.20" letter-spacing="0.90" xml:space="preserve">Nni Mio.</text>
<text x="972.0" y="454.6" fill="#00ff00" stroke="#00ff00" stroke-width="0.32" font-size="7.20" letter-spacing="0.90" xml:space="preserve">tNi [h]</text>
<text x="770.5" y="469.1" fill="#00ff00" stroke="#00ff00" stroke-width="0.32" font-size="7.20" letter-spacing="0.90" xml:space="preserve">1</text>
<text x="794.0" y="469.1" fill="#00ff00" stroke="#00ff00" stroke-width="0.32" font-size="7.20" letter-spacing="0.90" xml:space="preserve">88.00</text>
<text x="840.0" y="469.1" fill="#00ff00" stroke="#00ff00" stroke-width="0.32" font-size="7.20" letter-spacing="0.90" xml:space="preserve">67.00</text>
<text x="900.5" y="469.1" fill="#00ff00" stroke="#00ff00" stroke-width="0.32" font-size="7.20" text-anchor="middle" letter-spacing="0.90" xml:space="preserve">20</text>
<text x="933.0" y="469.1" fill="#00ff00" stroke="#00ff00" stroke-width="0.32" font-size="7.20" letter-spacing="0.90" xml:space="preserve">7.091</text>
<text x="979.0" y="469.1" fill="#00ff00" stroke="#00ff00" stroke-width="0.32" font-size="7.20" letter-spacing="0.90" xml:space="preserve">5834</text>
<text x="770.5" y="483.1" fill="#00ff00" stroke="#00ff00" stroke-width="0.32" font-size="7.20" letter-spacing="0.90" xml:space="preserve">2</text>
<text x="794.0" y="483.1" fill="#00ff00" stroke="#00ff00" stroke-width="0.32" font-size="7.20" letter-spacing="0.90" xml:space="preserve">88.00</text>
<text x="840.0" y="483.1" fill="#00ff00" stroke="#00ff00" stroke-width="0.32" font-size="7.20" letter-spacing="0.90" xml:space="preserve">70.00</text>
<text x="900.5" y="483.1" fill="#00ff00" stroke="#00ff00" stroke-width="0.32" font-size="7.20" text-anchor="middle" letter-spacing="0.90" xml:space="preserve">50</text>
<text x="930.0" y="483.1" fill="#00ff00" stroke="#00ff00" stroke-width="0.32" font-size="7.20" letter-spacing="0.90" xml:space="preserve">&gt; 10</text>
<text x="770.5" y="497.1" fill="#00ff00" stroke="#00ff00" stroke-width="0.32" font-size="7.20" letter-spacing="0.90" xml:space="preserve">3</text>
<text x="794.0" y="497.1" fill="#00ff00" stroke="#00ff00" stroke-width="0.32" font-size="7.20" letter-spacing="0.90" xml:space="preserve">88.00</text>
<text x="840.0" y="497.1" fill="#00ff00" stroke="#00ff00" stroke-width="0.32" font-size="7.20" letter-spacing="0.90" xml:space="preserve">68.00</text>
<text x="900.5" y="497.1" fill="#00ff00" stroke="#00ff00" stroke-width="0.32" font-size="7.20" text-anchor="middle" letter-spacing="0.90" xml:space="preserve">20</text>
<text x="933.0" y="497.1" fill="#00ff00" stroke="#00ff00" stroke-width="0.32" font-size="7.20" letter-spacing="0.90" xml:space="preserve">9.695</text>
<text x="979.0" y="497.1" fill="#00ff00" stroke="#00ff00" stroke-width="0.32" font-size="7.20" letter-spacing="0.90" xml:space="preserve">8079</text>
<text x="770.5" y="511.1" fill="#00ff00" stroke="#00ff00" stroke-width="0.32" font-size="7.20" letter-spacing="0.90" xml:space="preserve">4</text>
<text x="794.0" y="511.1" fill="#00ff00" stroke="#00ff00" stroke-width="0.32" font-size="7.20" letter-spacing="0.90" xml:space="preserve">88.00</text>
<text x="840.0" y="511.1" fill="#00ff00" stroke="#00ff00" stroke-width="0.32" font-size="7.20" letter-spacing="0.90" xml:space="preserve">66.00</text>
<text x="900.5" y="511.1" fill="#00ff00" stroke="#00ff00" stroke-width="0.32" font-size="7.20" text-anchor="middle" letter-spacing="0.90" xml:space="preserve">10</text>
<text x="933.0" y="511.1" fill="#00ff00" stroke="#00ff00" stroke-width="0.32" font-size="7.20" letter-spacing="0.90" xml:space="preserve">5.055</text>
<text x="979.0" y="511.1" fill="#00ff00" stroke="#00ff00" stroke-width="0.32" font-size="7.20" letter-spacing="0.90" xml:space="preserve">8425</text>
<text x="770.5" y="525.1" fill="#00ff00" stroke="#00ff00" stroke-width="0.32" font-size="7.20" letter-spacing="0.90" xml:space="preserve">5</text>
<text x="794.0" y="525.1" fill="#00ff00" stroke="#00ff00" stroke-width="0.32" font-size="7.20" letter-spacing="0.90" xml:space="preserve">88.00</text>
<text x="840.0" y="525.1" fill="#00ff00" stroke="#00ff00" stroke-width="0.32" font-size="7.20" letter-spacing="0.90" xml:space="preserve">64.00</text>
<text x="900.5" y="525.1" fill="#00ff00" stroke="#00ff00" stroke-width="0.32" font-size="7.20" text-anchor="middle" letter-spacing="0.90" xml:space="preserve">5</text>
<text x="933.0" y="525.1" fill="#00ff00" stroke="#00ff00" stroke-width="0.32" font-size="7.20" letter-spacing="0.90" xml:space="preserve">2.636</text>
<text x="979.0" y="525.1" fill="#00ff00" stroke="#00ff00" stroke-width="0.32" font-size="7.20" letter-spacing="0.90" xml:space="preserve">8787</text>
<line x1="1023.5" y1="445.5" x2="1221.5" y2="445.5" stroke="#ffff00" stroke-width="1"/>
<line x1="1023.5" y1="460.5" x2="1221.5" y2="460.5" stroke="#ffff00" stroke-width="1"/>
<line x1="1023.5" y1="474.5" x2="1221.5" y2="474.5" stroke="#ffff00" stroke-width="1"/>
<line x1="1023.5" y1="488.5" x2="1221.5" y2="488.5" stroke="#ffff00" stroke-width="1"/>
<line x1="1023.5" y1="502.5" x2="1221.5" y2="502.5" stroke="#ffff00" stroke-width="1"/>
<line x1="1023.5" y1="516.5" x2="1221.5" y2="516.5" stroke="#ffff00" stroke-width="1"/>
<line x1="1023.5" y1="530.5" x2="1221.5" y2="530.5" stroke="#ffff00" stroke-width="1"/>
<line x1="1023.5" y1="445.5" x2="1023.5" y2="530.5" stroke="#ffff00" stroke-width="1"/>
<line x1="1221.5" y1="445.5" x2="1221.5" y2="530.5" stroke="#ffff00" stroke-width="1"/>
<line x1="1128.5" y1="460.5" x2="1128.5" y2="530.5" stroke="#ffff00" stroke-width="1"/>
<line x1="1155.5" y1="460.5" x2="1155.5" y2="530.5" stroke="#ffff00" stroke-width="1"/>
<line x1="1181.5" y1="460.5" x2="1181.5" y2="530.5" stroke="#ffff00" stroke-width="1"/>
<text x="1026.0" y="454.6" fill="#00ff00" stroke="#00ff00" stroke-width="0.32" font-size="7.20" letter-spacing="0.90" xml:space="preserve">load spectrum</text>
<text x="1026.0" y="469.1" fill="#00ff00" stroke="#00ff00" stroke-width="0.32" font-size="7.20" letter-spacing="0.90" xml:space="preserve">period</text>
<text x="1131.5" y="469.1" fill="#00ff00" stroke="#00ff00" stroke-width="0.32" font-size="7.20" letter-spacing="0.90" xml:space="preserve">Tp</text>
<text x="1158.0" y="469.1" fill="#00ff00" stroke="#00ff00" stroke-width="0.32" font-size="7.20" letter-spacing="0.90" xml:space="preserve">s</text>
<text x="1184.5" y="469.1" fill="#00ff00" stroke="#00ff00" stroke-width="0.32" font-size="7.20" letter-spacing="0.90" xml:space="preserve">60</text>
<text x="1026.0" y="483.1" fill="#00ff00" stroke="#00ff00" stroke-width="0.32" font-size="7.20" letter-spacing="0.90" xml:space="preserve">strokes/period</text>
<text x="1131.5" y="483.1" fill="#00ff00" stroke="#00ff00" stroke-width="0.32" font-size="7.20" letter-spacing="0.90" xml:space="preserve">n/p</text>
<text x="1184.5" y="483.1" fill="#00ff00" stroke="#00ff00" stroke-width="0.32" font-size="7.20" letter-spacing="0.90" xml:space="preserve">105</text>
<text x="1026.0" y="497.1" fill="#00ff00" stroke="#00ff00" stroke-width="0.32" font-size="7.20" letter-spacing="0.90" xml:space="preserve">periods until failure</text>
<text x="1131.5" y="497.1" fill="#00ff00" stroke="#00ff00" stroke-width="0.32" font-size="7.20" letter-spacing="0.90" xml:space="preserve">Np</text>
<text x="1158.0" y="497.1" fill="#00ff00" stroke="#00ff00" stroke-width="0.32" font-size="7.20" letter-spacing="0.90" xml:space="preserve">Mio.</text>
<text x="1184.5" y="497.1" fill="#00ff00" stroke="#00ff00" stroke-width="0.32" font-size="7.20" letter-spacing="0.90" xml:space="preserve">0.1</text>
<text x="1026.0" y="511.1" fill="#00ff00" stroke="#00ff00" stroke-width="0.32" font-size="7.20" letter-spacing="0.90" xml:space="preserve">strokes until failure</text>
<text x="1131.5" y="511.1" fill="#00ff00" stroke="#00ff00" stroke-width="0.32" font-size="7.20" letter-spacing="0.90" xml:space="preserve">Nn</text>
<text x="1158.0" y="511.1" fill="#00ff00" stroke="#00ff00" stroke-width="0.32" font-size="7.20" letter-spacing="0.90" xml:space="preserve">Mio.</text>
<text x="1184.5" y="511.1" fill="#00ff00" stroke="#00ff00" stroke-width="0.32" font-size="7.20" letter-spacing="0.90" xml:space="preserve">12</text>
<text x="1026.0" y="525.1" fill="#00ff00" stroke="#00ff00" stroke-width="0.32" font-size="7.20" letter-spacing="0.90" xml:space="preserve">fatigue life</text>
<text x="1131.5" y="525.1" fill="#00ff00" stroke="#00ff00" stroke-width="0.32" font-size="7.20" letter-spacing="0.90" xml:space="preserve">tN</text>
<text x="1158.0" y="525.1" fill="#00ff00" stroke="#00ff00" stroke-width="0.32" font-size="7.20" letter-spacing="0.90" xml:space="preserve">h</text>
<text x="1184.5" y="525.1" fill="#00ff00" stroke="#00ff00" stroke-width="0.32" font-size="7.20" letter-spacing="0.90" xml:space="preserve">1895</text>
<line x1="874.5" y1="372.5" x2="874.5" y2="132.5" stroke="#ffff00" stroke-width="1"/>
<line x1="874.5" y1="372.5" x2="1112.7" y2="372.5" stroke="#ffff00" stroke-width="1"/>
<line x1="914.2" y1="372.5" x2="914.2" y2="132.5" stroke="#ffff00" stroke-width="1"/>
<line x1="874.5" y1="332.5" x2="1112.7" y2="332.5" stroke="#ffff00" stroke-width="1"/>
<line x1="953.9" y1="372.5" x2="953.9" y2="132.5" stroke="#ffff00" stroke-width="1"/>
<line x1="874.5" y1="292.5" x2="1112.7" y2="292.5" stroke="#ffff00" stroke-width="1"/>
<line x1="993.6" y1="372.5" x2="993.6" y2="132.5" stroke="#ffff00" stroke-width="1"/>
<line x1="874.5" y1="252.5" x2="1112.7" y2="252.5" stroke="#ffff00" stroke-width="1"/>
<line x1="1033.3" y1="372.5" x2="1033.3" y2="132.5" stroke="#ffff00" stroke-width="1"/>
<line x1="874.5" y1="212.5" x2="1112.7" y2="212.5" stroke="#ffff00" stroke-width="1"/>
<line x1="1073.0" y1="372.5" x2="1073.0" y2="132.5" stroke="#ffff00" stroke-width="1"/>
<line x1="874.5" y1="172.5" x2="1112.7" y2="172.5" stroke="#ffff00" stroke-width="1"/>
<line x1="1112.7" y1="372.5" x2="1112.7" y2="132.5" stroke="#ffff00" stroke-width="1"/>
<line x1="874.5" y1="132.5" x2="1112.7" y2="132.5" stroke="#ffff00" stroke-width="1"/>
<line x1="874.5" y1="372.5" x2="874.5" y2="120.0" stroke="#ffff00" stroke-width="1"/>
<rect x="873.0" y="125.0" width="3.0" height="6.0" fill="#ffff00"/>
<line x1="874.5" y1="372.5" x2="1125.0" y2="372.5" stroke="#ffff00" stroke-width="1"/>
<rect x="1115.0" y="371.0" width="5.0" height="3.0" fill="#ffff00"/>
<line x1="874.5" y1="372.5" x2="1112.7" y2="132.5" stroke="#ffff00" stroke-width="1"/>
<path d="M874.5 252.5 L948.7 197.9 L974.7 197.9" stroke="#c0c0c0" stroke-width="1" fill="none" stroke-linejoin="round" stroke-linecap="round"/>
<path d="M874.5 273.3 L974.7 197.9 L1001.9 197.9" stroke="#ff00ff" stroke-width="1" fill="none" stroke-linejoin="round" stroke-linecap="round"/>
<path d="M874.5 292.5 L1001.9 197.9 L1048.6 197.9" stroke="#00ff00" stroke-width="1" fill="none" stroke-linejoin="round" stroke-linecap="round"/>
<line x1="963.5" y1="222.5" x2="963.5" y2="282.5" stroke="#ff0000" stroke-width="3"/>
<circle cx="963.5" cy="222.5" r="1.8" fill="#ff00ff"/><circle cx="963.5" cy="282.5" r="1.8" fill="#ff00ff"/>
<text x="970.7" y="224.3" fill="#00ffff" stroke="#00ffff" stroke-width="0.32" font-size="6.50" xml:space="preserve">tau A2</text>
<text x="970.7" y="283.1" fill="#00ffff" stroke="#00ffff" stroke-width="0.32" font-size="6.50" xml:space="preserve">tau A1</text>
<text x="948.8" y="193.8" fill="#c0c0c0" stroke="#c0c0c0" stroke-width="0.32" font-size="6.50" xml:space="preserve">100000</text>
<text x="978.3" y="193.8" fill="#ff00ff" stroke="#ff00ff" stroke-width="0.32" font-size="6.50" xml:space="preserve">1Mio.</text>
<text x="1011.7" y="193.8" fill="#00ff00" stroke="#00ff00" stroke-width="0.32" font-size="6.50" textLength="44.0" lengthAdjust="spacing" xml:space="preserve">10 mill.cycles</text>
<text x="934.0" y="123.9" fill="#00ff00" stroke="#00ff00" stroke-width="0.00" font-size="9.30" textLength="63.4" lengthAdjust="spacing" xml:space="preserve">Goodman chart</text>
<text x="850.4" y="116.0" fill="#ffff00" stroke="#ffff00" stroke-width="0.32" font-size="6.50" xml:space="preserve">tau o</text>
<text x="850.0" y="375.3" fill="#ffff00" stroke="#ffff00" stroke-width="0.32" font-size="6.50" xml:space="preserve">0</text>
<text x="850.0" y="335.3" fill="#ffff00" stroke="#ffff00" stroke-width="0.32" font-size="6.50" xml:space="preserve">200</text>
<text x="850.0" y="295.3" fill="#ffff00" stroke="#ffff00" stroke-width="0.32" font-size="6.50" xml:space="preserve">400</text>
<text x="850.0" y="255.3" fill="#ffff00" stroke="#ffff00" stroke-width="0.32" font-size="6.50" xml:space="preserve">600</text>
<text x="850.0" y="215.3" fill="#ffff00" stroke="#ffff00" stroke-width="0.32" font-size="6.50" xml:space="preserve">800</text>
<text x="850.0" y="175.3" fill="#ffff00" stroke="#ffff00" stroke-width="0.32" font-size="6.50" xml:space="preserve">1000</text>
<text x="850.0" y="135.3" fill="#ffff00" stroke="#ffff00" stroke-width="0.32" font-size="6.50" xml:space="preserve">1200</text>
<text x="867.4" y="388.9" fill="#ffff00" stroke="#ffff00" stroke-width="0.32" font-size="6.50" xml:space="preserve">0</text>
<text x="907.3" y="388.9" fill="#ffff00" stroke="#ffff00" stroke-width="0.32" font-size="6.50" xml:space="preserve">200</text>
<text x="946.0" y="388.9" fill="#ffff00" stroke="#ffff00" stroke-width="0.32" font-size="6.50" xml:space="preserve">400</text>
<text x="986.7" y="388.9" fill="#ffff00" stroke="#ffff00" stroke-width="0.32" font-size="6.50" xml:space="preserve">600</text>
<text x="1026.0" y="388.9" fill="#ffff00" stroke="#ffff00" stroke-width="0.32" font-size="6.50" xml:space="preserve">800</text>
<text x="1065.4" y="388.9" fill="#ffff00" stroke="#ffff00" stroke-width="0.32" font-size="6.50" xml:space="preserve">1000</text>
<text x="1105.2" y="388.9" fill="#ffff00" stroke="#ffff00" stroke-width="0.32" font-size="6.50" xml:space="preserve">1200</text>
<text x="1132.0" y="388.9" fill="#ffff00" stroke="#ffff00" stroke-width="0.32" font-size="6.50" xml:space="preserve">tau u</text>
<text x="844.8" y="407.9" fill="#00ffff" stroke="#00ffff" stroke-width="0.32" font-size="7.50" xml:space="preserve">Goodman chart</text>
<text x="844.8" y="419.2" fill="#00ffff" stroke="#00ffff" stroke-width="0.32" font-size="7.50" textLength="183.4" lengthAdjust="spacing" xml:space="preserve">EN 10270-1-SH (DIN 17223-1 Typ C) not shot-blasted</text>
<text x="1041.7" y="102.0" fill="#00ffff" stroke="#00ffff" stroke-width="0.32" font-size="6.50" textLength="119.0" lengthAdjust="spacing" xml:space="preserve">Compression Spring  2098-4x32x120</text>
<text x="1041.7" y="112.0" fill="#00ffff" stroke="#00ffff" stroke-width="0.32" font-size="6.50" textLength="65.0" lengthAdjust="spacing" xml:space="preserve">Application Example</text>
<text x="1041.7" y="121.9" fill="#00ffff" stroke="#00ffff" stroke-width="0.32" font-size="6.50" textLength="58.0" lengthAdjust="spacing" xml:space="preserve">for Load Spectrum</text>
<text x="1139.0" y="139.4" fill="#00ffff" stroke="#00ffff" stroke-width="0.32" font-size="7.50" xml:space="preserve">d  = 4 mm</text>
<text x="1139.0" y="150.7" fill="#00ffff" stroke="#00ffff" stroke-width="0.32" font-size="7.50" xml:space="preserve">tauk1 =  450 MPa</text>
<text x="1139.0" y="162.1" fill="#00ffff" stroke="#00ffff" stroke-width="0.32" font-size="7.50" xml:space="preserve">tauk2=  745 MPa</text>
<text x="1139.0" y="173.7" fill="#00ffff" stroke="#00ffff" stroke-width="0.32" font-size="7.50" xml:space="preserve">taukh=  295 MPa</text>
<text x="1139.0" y="196.9" fill="#00ffff" stroke="#00ffff" stroke-width="0.32" font-size="7.50" xml:space="preserve">E = 206000 MPa</text>
<text x="1139.0" y="207.9" fill="#00ffff" stroke="#00ffff" stroke-width="0.32" font-size="7.50" xml:space="preserve">G =  82000 MPa</text>
<text x="1139.0" y="218.9" fill="#00ffff" stroke="#00ffff" stroke-width="0.32" font-size="7.50" xml:space="preserve">rho=  7.85 kg/dm³</text>
<text x="1139.0" y="230.1" fill="#00ffff" stroke="#00ffff" stroke-width="0.32" font-size="7.50" xml:space="preserve">Rm =  1788 MPa</text>
<text x="1139.0" y="241.4" fill="#00ffff" stroke="#00ffff" stroke-width="0.32" font-size="7.50" xml:space="preserve">tauoz =  873 MPa</text>
<text x="1139.0" y="252.7" fill="#00ffff" stroke="#00ffff" stroke-width="0.32" font-size="7.50" xml:space="preserve">tauhz =  280 MPa</text>
<text x="1139.0" y="275.7" fill="#00ffff" stroke="#00ffff" stroke-width="0.32" font-size="7.50" xml:space="preserve">L1, L2, freq.:</text>
<text x="1139.0" y="287.1" fill="#00ffff" stroke="#00ffff" stroke-width="0.32" font-size="7.50" xml:space="preserve">N  = 7 mill.cycles</text>
<text x="1139.0" y="298.1" fill="#00ffff" stroke="#00ffff" stroke-width="0.32" font-size="7.50" xml:space="preserve">tN = 194 h  (f=10/s)</text>
<text x="1139.0" y="320.5" fill="#00ffff" stroke="#00ffff" stroke-width="0.32" font-size="7.50" xml:space="preserve">load spectrum:</text>
<text x="1139.0" y="331.9" fill="#00ffff" stroke="#00ffff" stroke-width="0.32" font-size="7.50" xml:space="preserve">Nn = 12 mill.cycles</text>
<text x="1139.0" y="343.1" fill="#00ffff" stroke="#00ffff" stroke-width="0.32" font-size="7.50" xml:space="preserve">tN = 1895 h</text>
<line x1="793.5" y1="558.5" x2="793.5" y2="699.5" stroke="#ffff00" stroke-width="1"/>
<line x1="828.5" y1="558.5" x2="828.5" y2="699.5" stroke="#ffff00" stroke-width="1"/>
<line x1="862.5" y1="558.5" x2="862.5" y2="699.5" stroke="#ffff00" stroke-width="1"/>
<line x1="896.5" y1="558.5" x2="896.5" y2="699.5" stroke="#ffff00" stroke-width="1"/>
<line x1="930.5" y1="558.5" x2="930.5" y2="699.5" stroke="#ffff00" stroke-width="1"/>
<line x1="965.5" y1="558.5" x2="965.5" y2="699.5" stroke="#ffff00" stroke-width="1"/>
<line x1="999.5" y1="558.5" x2="999.5" y2="699.5" stroke="#ffff00" stroke-width="1"/>
<line x1="792.0" y1="558.5" x2="999.5" y2="558.5" stroke="#ffff00" stroke-width="1"/>
<line x1="792.0" y1="576.5" x2="999.5" y2="576.5" stroke="#ffff00" stroke-width="1"/>
<line x1="792.0" y1="593.5" x2="999.5" y2="593.5" stroke="#ffff00" stroke-width="1"/>
<line x1="792.0" y1="611.5" x2="999.5" y2="611.5" stroke="#ffff00" stroke-width="1"/>
<line x1="792.0" y1="629.5" x2="999.5" y2="629.5" stroke="#ffff00" stroke-width="1"/>
<line x1="792.0" y1="646.5" x2="999.5" y2="646.5" stroke="#ffff00" stroke-width="1"/>
<line x1="792.0" y1="664.5" x2="999.5" y2="664.5" stroke="#ffff00" stroke-width="1"/>
<line x1="792.0" y1="682.5" x2="999.5" y2="682.5" stroke="#ffff00" stroke-width="1"/>
<line x1="792.0" y1="699.5" x2="999.5" y2="699.5" stroke="#ffff00" stroke-width="1"/>
<line x1="793.5" y1="699.5" x2="793.5" y2="551.5" stroke="#ffff00" stroke-width="1"/>
<rect x="792.0" y="554.0" width="3.0" height="5.0" fill="#ffff00"/>
<line x1="999.5" y1="699.5" x2="1010.5" y2="699.5" stroke="#ffff00" stroke-width="1"/>
<rect x="1001.0" y="698.0" width="5.0" height="3.0" fill="#ffff00"/>
<text x="793.0" y="550.3" fill="#00ff00" stroke="#00ff00" stroke-width="0.32" font-size="7.00" textLength="97.0" lengthAdjust="spacing" xml:space="preserve">load spectrum (1 period = 60s)</text>
<text x="773.0" y="549.6" fill="#ffff00" stroke="#ffff00" stroke-width="0.20" font-size="4.00" textLength="11.5" lengthAdjust="spacing" xml:space="preserve">s [mm]</text>
<text x="778.5" y="560.0" fill="#ffff00" stroke="#ffff00" stroke-width="0.20" font-size="4.20" text-anchor="end" font-weight="bold" xml:space="preserve">80</text>
<text x="778.5" y="578.0" fill="#ffff00" stroke="#ffff00" stroke-width="0.20" font-size="4.20" text-anchor="end" font-weight="bold" xml:space="preserve">70</text>
<text x="778.5" y="595.0" fill="#ffff00" stroke="#ffff00" stroke-width="0.20" font-size="4.20" text-anchor="end" font-weight="bold" xml:space="preserve">60</text>
<text x="778.5" y="613.0" fill="#ffff00" stroke="#ffff00" stroke-width="0.20" font-size="4.20" text-anchor="end" font-weight="bold" xml:space="preserve">50</text>
<text x="778.5" y="631.0" fill="#ffff00" stroke="#ffff00" stroke-width="0.20" font-size="4.20" text-anchor="end" font-weight="bold" xml:space="preserve">40</text>
<text x="778.5" y="648.0" fill="#ffff00" stroke="#ffff00" stroke-width="0.20" font-size="4.20" text-anchor="end" font-weight="bold" xml:space="preserve">30</text>
<text x="778.5" y="666.0" fill="#ffff00" stroke="#ffff00" stroke-width="0.20" font-size="4.20" text-anchor="end" font-weight="bold" xml:space="preserve">20</text>
<text x="778.5" y="684.0" fill="#ffff00" stroke="#ffff00" stroke-width="0.20" font-size="4.20" text-anchor="end" font-weight="bold" xml:space="preserve">10</text>
<text x="778.5" y="701.0" fill="#ffff00" stroke="#ffff00" stroke-width="0.20" font-size="4.20" text-anchor="end" font-weight="bold" xml:space="preserve">0</text>
<text x="788.5" y="708.9" fill="#ffff00" stroke="#ffff00" stroke-width="0.20" font-size="4.20" text-anchor="middle" font-weight="bold" xml:space="preserve">0</text>
<text x="823.5" y="708.9" fill="#ffff00" stroke="#ffff00" stroke-width="0.20" font-size="4.20" text-anchor="middle" font-weight="bold" xml:space="preserve">10</text>
<text x="857.5" y="708.9" fill="#ffff00" stroke="#ffff00" stroke-width="0.20" font-size="4.20" text-anchor="middle" font-weight="bold" xml:space="preserve">20</text>
<text x="891.5" y="708.9" fill="#ffff00" stroke="#ffff00" stroke-width="0.20" font-size="4.20" text-anchor="middle" font-weight="bold" xml:space="preserve">30</text>
<text x="925.5" y="708.9" fill="#ffff00" stroke="#ffff00" stroke-width="0.20" font-size="4.20" text-anchor="middle" font-weight="bold" xml:space="preserve">40</text>
<text x="960.5" y="708.9" fill="#ffff00" stroke="#ffff00" stroke-width="0.20" font-size="4.20" text-anchor="middle" font-weight="bold" xml:space="preserve">50</text>
<text x="994.5" y="708.9" fill="#ffff00" stroke="#ffff00" stroke-width="0.20" font-size="4.20" text-anchor="middle" font-weight="bold" xml:space="preserve">60</text>
<text x="1011.5" y="709.1" fill="#ffff00" stroke="#ffff00" stroke-width="0.20" font-size="4.20" font-weight="bold" xml:space="preserve">s</text>
<rect x="828.5" y="611.5" width="85.0" height="32.0" stroke="#ffff00" stroke-width="1" fill="none"/>
<rect x="793.5" y="606.5" width="35.0" height="37.0" stroke="#ff0000" stroke-width="1" fill="none"/>
<rect x="913.5" y="608.5" width="35.0" height="35.0" stroke="#00ff00" stroke-width="1" fill="none"/>
<rect x="948.5" y="604.5" width="17.0" height="39.0" stroke="#00ffff" stroke-width="1" fill="none"/>
<rect x="965.5" y="601.5" width="8.0" height="42.0" stroke="#0000ff" stroke-width="1" fill="none"/>
<text x="811.0" y="624.3" fill="#ff0000" stroke="#ff0000" stroke-width="0.20" font-size="4.20" xml:space="preserve">1</text>
<text x="870.5" y="626.7" fill="#ffff00" stroke="#ffff00" stroke-width="0.20" font-size="4.20" xml:space="preserve">2</text>
<text x="930.3" y="625.0" fill="#00ff00" stroke="#00ff00" stroke-width="0.20" font-size="4.20" xml:space="preserve">3</text>
<text x="956.0" y="624.3" fill="#00ffff" stroke="#00ffff" stroke-width="0.20" font-size="4.20" xml:space="preserve">4</text>
<text x="969.3" y="622.1" fill="#0000ff" stroke="#0000ff" stroke-width="0.20" font-size="4.20" xml:space="preserve">5</text>
<rect x="1052.5" y="558.5" width="74.0" height="156.0" stroke="#00ffff" stroke-width="1" fill="none"/>
<line x1="1052.5" y1="588.5" x2="1126.5" y2="588.5" stroke="#ff0000" stroke-width="1"/>
<line x1="1052.5" y1="662.5" x2="1126.5" y2="662.5" stroke="#ffff00" stroke-width="1"/>
<line x1="1052.5" y1="691.5" x2="1126.5" y2="691.5" stroke="#00ff00" stroke-width="1"/>
<line x1="1052.5" y1="706.5" x2="1126.5" y2="706.5" stroke="#00ffff" stroke-width="1"/>
<line x1="1052.5" y1="714.5" x2="1126.5" y2="714.5" stroke="#0000ff" stroke-width="1"/>
<text x="1052.4" y="553.6" fill="#00ffff" stroke="#00ffff" stroke-width="0.32" font-size="7.20" textLength="64.5" lengthAdjust="spacing" xml:space="preserve">percent.strokes</text>
<text x="1059.8" y="575.9" fill="#ff0000" stroke="#ff0000" stroke-width="0.32" font-size="7.20" textLength="42.5" lengthAdjust="spacing" xml:space="preserve">1:  19.0 %</text>
<text x="1059.8" y="628.0" fill="#ffff00" stroke="#ffff00" stroke-width="0.32" font-size="7.20" textLength="42.5" lengthAdjust="spacing" xml:space="preserve">2:  47.6 %</text>
<text x="1059.8" y="679.9" fill="#00ff00" stroke="#00ff00" stroke-width="0.32" font-size="7.20" textLength="42.5" lengthAdjust="spacing" xml:space="preserve">3:  19.0 %</text>
<text x="1059.8" y="701.6" fill="#00ffff" stroke="#00ffff" stroke-width="0.32" font-size="7.20" textLength="40.5" lengthAdjust="spacing" xml:space="preserve">4:   9.5 %</text>
<text x="1059.8" y="712.8" fill="#0000ff" stroke="#0000ff" stroke-width="0.32" font-size="7.20" textLength="40.5" lengthAdjust="spacing" xml:space="preserve">5:   4.8 %</text>
<rect x="1140.5" y="558.5" width="74.0" height="156.0" stroke="#00ffff" stroke-width="1" fill="none"/>
<line x1="1140.5" y1="609.5" x2="1214.5" y2="609.5" stroke="#ff0000" stroke-width="1"/>
<line x1="1140.5" y1="645.5" x2="1214.5" y2="645.5" stroke="#00ff00" stroke-width="1"/>
<line x1="1140.5" y1="680.5" x2="1214.5" y2="680.5" stroke="#00ffff" stroke-width="1"/>
<line x1="1140.5" y1="714.5" x2="1214.5" y2="714.5" stroke="#0000ff" stroke-width="1"/>
<text x="1140.3" y="553.6" fill="#00ffff" stroke="#00ffff" stroke-width="0.32" font-size="7.20" textLength="66.0" lengthAdjust="spacing" xml:space="preserve">percent.damage</text>
<text x="1148.8" y="586.8" fill="#ff0000" stroke="#ff0000" stroke-width="0.32" font-size="7.20" textLength="42.5" lengthAdjust="spacing" xml:space="preserve">1:  32.5 %</text>
<text x="1148.8" y="629.6" fill="#00ff00" stroke="#00ff00" stroke-width="0.32" font-size="7.20" textLength="42.5" lengthAdjust="spacing" xml:space="preserve">3:  23.5 %</text>
<text x="1148.8" y="665.8" fill="#00ffff" stroke="#00ffff" stroke-width="0.32" font-size="7.20" textLength="42.5" lengthAdjust="spacing" xml:space="preserve">4:  22.5 %</text>
<text x="1148.8" y="699.8" fill="#0000ff" stroke="#0000ff" stroke-width="0.32" font-size="7.20" textLength="42.5" lengthAdjust="spacing" xml:space="preserve">5:  21.6 %</text>
<line x1="127.5" y1="866.5" x2="127.5" y2="612.5" stroke="#ffff00" stroke-width="1" stroke-dasharray="3 3"/>
<line x1="99.5" y1="834.5" x2="320.5" y2="834.5" stroke="#ffff00" stroke-width="1" stroke-dasharray="3 3"/>
<line x1="154.5" y1="866.5" x2="154.5" y2="612.5" stroke="#ffff00" stroke-width="1" stroke-dasharray="3 3"/>
<line x1="99.5" y1="802.5" x2="320.5" y2="802.5" stroke="#ffff00" stroke-width="1" stroke-dasharray="3 3"/>
<line x1="182.5" y1="866.5" x2="182.5" y2="612.5" stroke="#ffff00" stroke-width="1" stroke-dasharray="3 3"/>
<line x1="99.5" y1="771.5" x2="320.5" y2="771.5" stroke="#ffff00" stroke-width="1" stroke-dasharray="3 3"/>
<line x1="209.5" y1="866.5" x2="209.5" y2="612.5" stroke="#ffff00" stroke-width="1" stroke-dasharray="3 3"/>
<line x1="99.5" y1="739.5" x2="320.5" y2="739.5" stroke="#ffff00" stroke-width="1" stroke-dasharray="3 3"/>
<line x1="237.5" y1="866.5" x2="237.5" y2="612.5" stroke="#ffff00" stroke-width="1" stroke-dasharray="3 3"/>
<line x1="99.5" y1="707.5" x2="320.5" y2="707.5" stroke="#ffff00" stroke-width="1" stroke-dasharray="3 3"/>
<line x1="265.5" y1="866.5" x2="265.5" y2="612.5" stroke="#ffff00" stroke-width="1" stroke-dasharray="3 3"/>
<line x1="99.5" y1="675.5" x2="320.5" y2="675.5" stroke="#ffff00" stroke-width="1" stroke-dasharray="3 3"/>
<line x1="292.5" y1="866.5" x2="292.5" y2="612.5" stroke="#ffff00" stroke-width="1" stroke-dasharray="3 3"/>
<line x1="99.5" y1="644.5" x2="320.5" y2="644.5" stroke="#ffff00" stroke-width="1" stroke-dasharray="3 3"/>
<line x1="320.5" y1="866.5" x2="320.5" y2="612.5" stroke="#ffff00" stroke-width="1" stroke-dasharray="3 3"/>
<line x1="99.5" y1="612.5" x2="320.5" y2="612.5" stroke="#ffff00" stroke-width="1" stroke-dasharray="3 3"/>
<line x1="99.5" y1="866.5" x2="99.5" y2="599.0" stroke="#ffff00" stroke-width="1"/>
<rect x="98.0" y="604.0" width="3.0" height="6.0" fill="#ffff00"/>
<line x1="99.5" y1="866.5" x2="331.0" y2="866.5" stroke="#ffff00" stroke-width="1"/>
<rect x="322.0" y="865.0" width="6.0" height="3.0" fill="#ffff00"/>
<line x1="127.5" y1="864.5" x2="127.5" y2="868.5" stroke="#ffff00" stroke-width="1"/>
<line x1="97.5" y1="834.5" x2="101.5" y2="834.5" stroke="#ffff00" stroke-width="1"/>
<line x1="154.5" y1="864.5" x2="154.5" y2="868.5" stroke="#ffff00" stroke-width="1"/>
<line x1="97.5" y1="802.5" x2="101.5" y2="802.5" stroke="#ffff00" stroke-width="1"/>
<line x1="182.5" y1="864.5" x2="182.5" y2="868.5" stroke="#ffff00" stroke-width="1"/>
<line x1="97.5" y1="771.5" x2="101.5" y2="771.5" stroke="#ffff00" stroke-width="1"/>
<line x1="209.5" y1="864.5" x2="209.5" y2="868.5" stroke="#ffff00" stroke-width="1"/>
<line x1="97.5" y1="739.5" x2="101.5" y2="739.5" stroke="#ffff00" stroke-width="1"/>
<line x1="237.5" y1="864.5" x2="237.5" y2="868.5" stroke="#ffff00" stroke-width="1"/>
<line x1="97.5" y1="707.5" x2="101.5" y2="707.5" stroke="#ffff00" stroke-width="1"/>
<line x1="265.5" y1="864.5" x2="265.5" y2="868.5" stroke="#ffff00" stroke-width="1"/>
<line x1="97.5" y1="675.5" x2="101.5" y2="675.5" stroke="#ffff00" stroke-width="1"/>
<line x1="292.5" y1="864.5" x2="292.5" y2="868.5" stroke="#ffff00" stroke-width="1"/>
<line x1="97.5" y1="644.5" x2="101.5" y2="644.5" stroke="#ffff00" stroke-width="1"/>
<line x1="320.5" y1="864.5" x2="320.5" y2="868.5" stroke="#ffff00" stroke-width="1"/>
<line x1="97.5" y1="612.5" x2="101.5" y2="612.5" stroke="#ffff00" stroke-width="1"/>
<line x1="313.5" y1="633.5" x2="104.0" y2="633.5" stroke="#ff0000" stroke-width="1" stroke-dasharray="17.5 6.4"/>
<line x1="313.5" y1="633.5" x2="313.5" y2="866.5" stroke="#ff0000" stroke-width="1" stroke-dasharray="17.5 6.4"/>
<text x="229.6" y="630.4" fill="#ff0000" stroke="#ff0000" stroke-width="0.32" font-size="7.50" xml:space="preserve">Fc</text>
<line x1="286.5" y1="663.5" x2="100.5" y2="663.5" stroke="#00ff00" stroke-width="1" stroke-dasharray="17.5 6.4"/>
<line x1="286.5" y1="663.5" x2="286.5" y2="866.5" stroke="#00ff00" stroke-width="1" stroke-dasharray="17.5 6.4"/>
<text x="186.0" y="661.1" fill="#00ff00" stroke="#00ff00" stroke-width="0.32" font-size="7.50" xml:space="preserve">Fn</text>
<line x1="245.5" y1="707.5" x2="100.5" y2="707.5" stroke="#ff00ff" stroke-width="1" stroke-dasharray="17.5 6.4"/>
<line x1="245.5" y1="707.5" x2="245.5" y2="866.5" stroke="#ff00ff" stroke-width="1" stroke-dasharray="17.5 6.4"/>
<text x="122.0" y="704.7" fill="#ff00ff" stroke="#ff00ff" stroke-width="0.32" font-size="7.50" xml:space="preserve">F2</text>
<line x1="245.5" y1="698.0" x2="245.5" y2="717.0" stroke="#ff00ff" stroke-width="1"/>
<line x1="243.5" y1="698.0" x2="247.5" y2="698.0" stroke="#ff00ff" stroke-width="1"/>
<line x1="243.5" y1="717.0" x2="247.5" y2="717.0" stroke="#ff00ff" stroke-width="1"/>
<line x1="187.5" y1="770.5" x2="100.5" y2="770.5" stroke="#00ffff" stroke-width="1" stroke-dasharray="17.5 6.4"/>
<line x1="187.5" y1="770.5" x2="187.5" y2="866.5" stroke="#00ffff" stroke-width="1" stroke-dasharray="17.5 6.4"/>
<text x="104.0" y="767.3" fill="#00ffff" stroke="#00ffff" stroke-width="0.32" font-size="7.50" xml:space="preserve">F1</text>
<line x1="187.5" y1="761.7" x2="187.5" y2="779.3" stroke="#00ffff" stroke-width="1"/>
<line x1="185.5" y1="761.7" x2="189.5" y2="761.7" stroke="#00ffff" stroke-width="1"/>
<line x1="185.5" y1="779.3" x2="189.5" y2="779.3" stroke="#00ffff" stroke-width="1"/>
<line x1="174.5" y1="785.5" x2="100.5" y2="785.5" stroke="#0000ff" stroke-width="1" stroke-dasharray="17.5 6.4"/>
<line x1="174.5" y1="785.5" x2="174.5" y2="866.5" stroke="#0000ff" stroke-width="1" stroke-dasharray="17.5 6.4"/>
<text x="102.5" y="783.0" fill="#0000ff" stroke="#0000ff" stroke-width="0.32" font-size="7.50" xml:space="preserve">Fk</text>
<line x1="99.5" y1="866.5" x2="313.5" y2="633.8" stroke="#ff0000" stroke-width="3.2" shape-rendering="geometricPrecision"/>
<text x="158.9" y="604.1" fill="#00ff00" stroke="#00ff00" stroke-width="0.00" font-size="10.80" textLength="59.0" lengthAdjust="spacing" xml:space="preserve">Char.curve</text>
<text x="76.7" y="593.8" fill="#ffff00" stroke="#ffff00" stroke-width="0.32" font-size="6.50" xml:space="preserve">F [N]</text>
<text x="77.0" y="868.1" fill="#ffff00" stroke="#ffff00" stroke-width="0.32" font-size="6.50" xml:space="preserve">0</text>
<text x="77.0" y="836.4" fill="#ffff00" stroke="#ffff00" stroke-width="0.32" font-size="6.50" xml:space="preserve">100</text>
<text x="77.0" y="804.7" fill="#ffff00" stroke="#ffff00" stroke-width="0.32" font-size="6.50" xml:space="preserve">200</text>
<text x="77.0" y="772.9" fill="#ffff00" stroke="#ffff00" stroke-width="0.32" font-size="6.50" xml:space="preserve">300</text>
<text x="77.0" y="741.2" fill="#ffff00" stroke="#ffff00" stroke-width="0.32" font-size="6.50" xml:space="preserve">400</text>
<text x="77.0" y="709.4" fill="#ffff00" stroke="#ffff00" stroke-width="0.32" font-size="6.50" xml:space="preserve">500</text>
<text x="77.0" y="677.7" fill="#ffff00" stroke="#ffff00" stroke-width="0.32" font-size="6.50" xml:space="preserve">600</text>
<text x="77.0" y="646.0" fill="#ffff00" stroke="#ffff00" stroke-width="0.32" font-size="6.50" xml:space="preserve">700</text>
<text x="77.0" y="614.2" fill="#ffff00" stroke="#ffff00" stroke-width="0.32" font-size="6.50" xml:space="preserve">800</text>
<text x="92.2" y="883.9" fill="#ffff00" stroke="#ffff00" stroke-width="0.32" font-size="6.50" xml:space="preserve">0</text>
<text x="120.2" y="883.9" fill="#ffff00" stroke="#ffff00" stroke-width="0.32" font-size="6.50" xml:space="preserve">10</text>
<text x="147.8" y="883.9" fill="#ffff00" stroke="#ffff00" stroke-width="0.32" font-size="6.50" xml:space="preserve">20</text>
<text x="175.4" y="883.9" fill="#ffff00" stroke="#ffff00" stroke-width="0.32" font-size="6.50" xml:space="preserve">30</text>
<text x="203.0" y="883.9" fill="#ffff00" stroke="#ffff00" stroke-width="0.32" font-size="6.50" xml:space="preserve">40</text>
<text x="230.6" y="883.9" fill="#ffff00" stroke="#ffff00" stroke-width="0.32" font-size="6.50" xml:space="preserve">50</text>
<text x="258.2" y="883.9" fill="#ffff00" stroke="#ffff00" stroke-width="0.32" font-size="6.50" xml:space="preserve">60</text>
<text x="285.8" y="883.9" fill="#ffff00" stroke="#ffff00" stroke-width="0.32" font-size="6.50" xml:space="preserve">70</text>
<text x="313.4" y="883.9" fill="#ffff00" stroke="#ffff00" stroke-width="0.32" font-size="6.50" xml:space="preserve">80</text>
<text x="335.0" y="884.1" fill="#ffff00" stroke="#ffff00" stroke-width="0.32" font-size="6.50" textLength="22.0" lengthAdjust="spacing" xml:space="preserve">s[mm]</text>
<line x1="449.5" y1="866.5" x2="449.5" y2="612.5" stroke="#ffff00" stroke-width="1" stroke-dasharray="3 3"/>
<line x1="405.5" y1="815.5" x2="626.5" y2="815.5" stroke="#ffff00" stroke-width="1" stroke-dasharray="3 3"/>
<line x1="493.5" y1="866.5" x2="493.5" y2="612.5" stroke="#ffff00" stroke-width="1" stroke-dasharray="3 3"/>
<line x1="405.5" y1="764.5" x2="626.5" y2="764.5" stroke="#ffff00" stroke-width="1" stroke-dasharray="3 3"/>
<line x1="537.5" y1="866.5" x2="537.5" y2="612.5" stroke="#ffff00" stroke-width="1" stroke-dasharray="3 3"/>
<line x1="405.5" y1="714.5" x2="626.5" y2="714.5" stroke="#ffff00" stroke-width="1" stroke-dasharray="3 3"/>
<line x1="581.5" y1="866.5" x2="581.5" y2="612.5" stroke="#ffff00" stroke-width="1" stroke-dasharray="3 3"/>
<line x1="405.5" y1="663.5" x2="626.5" y2="663.5" stroke="#ffff00" stroke-width="1" stroke-dasharray="3 3"/>
<line x1="626.5" y1="866.5" x2="626.5" y2="612.5" stroke="#ffff00" stroke-width="1" stroke-dasharray="3 3"/>
<line x1="405.5" y1="612.5" x2="626.5" y2="612.5" stroke="#ffff00" stroke-width="1" stroke-dasharray="3 3"/>
<line x1="405.5" y1="866.5" x2="405.5" y2="599.0" stroke="#ffff00" stroke-width="1"/>
<rect x="404.0" y="604.0" width="3.0" height="6.0" fill="#ffff00"/>
<line x1="405.5" y1="866.5" x2="638.0" y2="866.5" stroke="#ffff00" stroke-width="1"/>
<rect x="628.0" y="865.0" width="6.0" height="3.0" fill="#ffff00"/>
<line x1="449.5" y1="864.5" x2="449.5" y2="868.5" stroke="#ffff00" stroke-width="1"/>
<line x1="403.5" y1="815.5" x2="407.5" y2="815.5" stroke="#ffff00" stroke-width="1"/>
<line x1="493.5" y1="864.5" x2="493.5" y2="868.5" stroke="#ffff00" stroke-width="1"/>
<line x1="403.5" y1="764.5" x2="407.5" y2="764.5" stroke="#ffff00" stroke-width="1"/>
<line x1="537.5" y1="864.5" x2="537.5" y2="868.5" stroke="#ffff00" stroke-width="1"/>
<line x1="403.5" y1="714.5" x2="407.5" y2="714.5" stroke="#ffff00" stroke-width="1"/>
<line x1="581.5" y1="864.5" x2="581.5" y2="868.5" stroke="#ffff00" stroke-width="1"/>
<line x1="403.5" y1="663.5" x2="407.5" y2="663.5" stroke="#ffff00" stroke-width="1"/>
<line x1="626.5" y1="864.5" x2="626.5" y2="868.5" stroke="#ffff00" stroke-width="1"/>
<line x1="403.5" y1="612.5" x2="407.5" y2="612.5" stroke="#ffff00" stroke-width="1"/>
<path d="M462.2 612.6 L462.2 655.6 L462.2 656.3 L462.2 657.1 L462.2 657.9 L462.2 658.8 L462.2 659.7 L462.2 660.6 L462.2 661.5 L462.2 662.5 L462.3 663.4 L462.3 664.4 L462.3 665.3 L462.3 666.3 L462.3 667.3 L462.3 668.3 L462.3 669.3 L462.4 670.3 L462.4 671.3 L462.4 672.3 L462.4 673.3 L462.4 674.3 L462.5 675.4 L462.5 676.4 L462.5 677.4 L462.5 678.5 L462.6 679.5 L462.6 680.5 L462.6 681.6 L462.7 682.6 L462.7 683.7 L462.8 684.7 L462.8 685.8 L462.8 686.8 L462.9 687.9 L462.9 689.0 L463.0 690.0 L463.0 691.1 L463.1 692.1 L463.1 693.2 L463.2 694.3 L463.2 695.3 L463.3 696.4 L463.4 697.4 L463.4 698.5 L463.5 699.6 L463.6 700.6 L463.6 701.7 L463.7 702.8 L463.8 703.8 L463.8 704.9 L463.9 705.9 L464.0 707.0 L464.1 708.1 L464.1 709.1 L464.2 710.2 L464.3 711.2 L464.4 712.3 L464.5 713.3 L464.6 714.4 L464.6 715.4 L464.7 716.5 L464.8 717.5 L464.9 718.6 L465.0 719.6 L465.1 720.6 L465.2 721.7 L465.3 722.7 L465.4 723.7 L465.5 724.8 L465.6 725.8 L465.8 726.8 L465.9 727.8 L466.0 728.9 L466.1 729.9 L466.2 730.9 L466.3 731.9 L466.5 732.9 L466.6 733.9 L466.7 734.9 L466.8 735.9 L467.0 736.9 L467.1 737.9 L467.2 738.9 L467.4 739.8 L467.5 740.8 L467.6 741.8 L467.8 742.8 L467.9 743.7 L468.1 744.7 L468.2 745.6 L468.4 746.6 L468.5 747.5 L468.7 748.5 L468.8 749.4 L469.0 750.4 L469.1 751.3 L469.3 752.2 L469.5 753.2 L469.6 754.1 L469.8 755.0 L470.0 755.9 L470.1 756.8 L470.3 757.7 L470.5 758.6 L470.7 759.5 L470.9 760.4 L471.0 761.3 L471.2 762.1 L471.4 763.0 L471.6 763.9 L471.8 764.8 L472.0 765.6 L472.2 766.5 L472.4 767.3 L472.6 768.2 L472.8 769.0 L473.0 769.8 L473.2 770.7 L473.4 771.5 L473.6 772.3 L473.8 773.1 L474.0 773.9 L474.2 774.7 L474.4 775.5 L474.7 776.3 L474.9 777.1 L475.1 777.9 L475.3 778.7 L475.6 779.4 L475.8 780.2 L476.0 781.0 L476.3 781.7 L476.5 782.5 L476.7 783.2 L477.0 784.0 L477.2 784.7 L477.5 785.4 L477.7 786.2 L478.0 786.9 L478.2 787.6 L478.5 788.3 L478.7 789.0 L479.0 789.7 L479.3 790.4 L479.5 791.1 L479.8 791.8 L480.1 792.5 L480.3 793.2 L480.6 793.8 L480.9 794.5 L481.1 795.2 L481.4 795.8 L481.7 796.5 L482.0 797.1 L482.3 797.7 L482.6 798.4 L482.8 799.0 L483.1 799.6 L483.4 800.3 L483.7 800.9 L484.0 801.5 L484.3 802.1 L484.6 802.7 L484.9 803.3 L485.2 803.9 L485.6 804.5 L485.9 805.0 L486.2 805.6 L486.5 806.2 L486.8 806.8 L487.1 807.3 L487.5 807.9 L487.8 808.4 L488.1 809.0 L488.5 809.5 L488.8 810.0 L489.1 810.6 L489.5 811.1 L489.8 811.6 L490.1 812.2 L490.5 812.7 L490.8 813.2 L491.2 813.7 L491.5 814.2 L491.9 814.7 L492.2 815.2 L492.6 815.7 L493.0 816.1 L493.3 816.6 L493.7 817.1 L494.1 817.6 L494.4 818.0 L494.8 818.5 L495.2 819.0 L495.5 819.4 L495.9 819.9 L496.3 820.3 L496.7 820.8 L497.1 821.2 L497.5 821.6 L497.9 822.1 L498.3 822.5 L498.6 822.9 L499.0 823.3 L499.4 823.7 L499.8 824.1 L500.3 824.6 L500.7 825.0 L501.1 825.4 L501.5 825.7 L501.9 826.1 L502.3 826.5 L502.7 826.9 L503.2 827.3 L503.6 827.7 L504.0 828.0 L504.4 828.4 L504.9 828.8 L505.3 829.1 L505.7 829.5 L506.2 829.9 L506.6 830.2 L507.1 830.6 L507.5 830.9 L508.0 831.2 L508.4 831.6 L508.9 831.9 L509.3 832.2 L509.8 832.6 L510.2 832.9 L510.7 833.2 L511.2 833.5 L511.6 833.9 L512.1 834.2 L512.6 834.5 L513.0 834.8 L513.5 835.1 L514.0 835.4 L514.5 835.7 L515.0 836.0 L515.4 836.3 L515.9 836.6 L516.4 836.9 L516.9 837.1 L517.4 837.4 L517.9 837.7 L518.4 838.0 L518.9 838.2 L519.4 838.5 L519.9 838.8 L520.5 839.0 L521.0 839.3 L521.5 839.6 L522.0 839.8 L522.5 840.1 L523.0 840.3 L523.6 840.6 L524.1 840.8 L524.6 841.1 L525.2 841.3 L525.7 841.5 L526.2 841.8 L526.8 842.0 L527.3 842.3 L527.9 842.5 L528.4 842.7 L529.0 842.9 L529.5 843.2 L530.1 843.4 L530.6 843.6 L531.2 843.8 L531.8 844.0 L532.3 844.2 L532.9 844.4 L533.5 844.7 L534.0 844.9 L534.6 845.1 L535.2 845.3 L535.8 845.5 L536.4 845.7 L536.9 845.9 L537.5 846.1 L538.1 846.2 L538.7 846.4 L539.3 846.6 L539.9 846.8 L540.5 847.0 L541.1 847.2 L541.7 847.4 L542.3 847.5 L542.9 847.7 L543.6 847.9 L544.2 848.1 L544.8 848.2 L545.4 848.4 L546.0 848.6 L546.7 848.7 L547.3 848.9 L547.9 849.1 L548.6 849.2 L549.2 849.4 L549.8 849.5 L550.5 849.7 L551.1 849.8 L551.8 850.0 L552.4 850.2 L553.1 850.3 L553.7 850.5 L554.4 850.6 L555.0 850.7 L555.7 850.9 L556.4 851.0 L557.0 851.2 L557.7 851.3 L558.4 851.5 L559.0 851.6 L559.7 851.7 L560.4 851.9 L561.1 852.0 L561.8 852.1 L562.5 852.3 L563.2 852.4 L563.8 852.5 L564.5 852.6 L565.2 852.8 L565.9 852.9 L566.6 853.0 L567.3 853.1 L568.1 853.2 L568.8 853.4 L569.5 853.5 L570.2 853.6 L570.9 853.7 L571.6 853.8 L572.4 853.9 L573.1 854.1 L573.8 854.2 L574.6 854.3 L575.3 854.4 L576.0 854.5 L576.8 854.6 L577.5 854.7 L578.3 854.8 L579.0 854.9 L579.8 855.0 L580.5 855.1 L581.3 855.2 L582.0 855.3 L582.8 855.4 L583.5 855.5 L584.3 855.6 L585.1 855.7 L585.8 855.8 L586.6 855.9 L587.4 856.0 L588.2 856.1 L589.0 856.2 L589.7 856.3 L590.5 856.3 L591.3 856.4 L592.1 856.5 L592.9 856.6 L593.7 856.7 L594.5 856.8 L595.3 856.9 L596.1 856.9 L596.9 857.0 L597.7 857.1 L598.5 857.2 L599.4 857.3 L600.2 857.4 L601.0 857.4 L601.8 857.5 L602.7 857.6 L603.5 857.7 L604.3 857.7 L605.2 857.8 L606.0 857.9 L606.8 858.0 L607.7 858.0 L608.5 858.1 L609.4 858.2 L610.2 858.2 L611.1 858.3 L611.9 858.4 L612.8 858.5 L613.7 858.5 L614.5 858.6 L615.4 858.7 L616.3 858.7 L617.1 858.8 L618.0 858.9 L618.9 858.9 L619.8 859.0 L620.6 859.0 L621.5 859.1 L622.4 859.2 L623.3 859.2 L624.2 859.3 L625.1 859.3 L626.0 859.4" stroke="#ff0000" stroke-width="3" fill="none" stroke-linejoin="round" stroke-linecap="round" shape-rendering="geometricPrecision"/>
<line x1="488.5" y1="866.5" x2="488.5" y2="701.0" stroke="#ffff00" stroke-width="1"/>
<path d="M485.0 702.0l2 -2l2 2l-2 2z" stroke="#ff0000" fill="none" stroke-width="1"/>
<text x="494.7" y="702.1" fill="#ff0000" stroke="#ff0000" stroke-width="0.00" font-size="11.50" xml:space="preserve">sc</text>
<path d="M485.0 723.2l2 -2l2 2l-2 2z" stroke="#00ff00" fill="none" stroke-width="1"/>
<text x="494.7" y="723.1" fill="#00ff00" stroke="#00ff00" stroke-width="0.00" font-size="11.50" xml:space="preserve">sn</text>
<path d="M485.0 754.4l2 -2l2 2l-2 2z" stroke="#ff00ff" fill="none" stroke-width="1"/>
<text x="494.7" y="754.3" fill="#ff00ff" stroke="#ff00ff" stroke-width="0.00" font-size="11.50" xml:space="preserve">s2</text>
<path d="M485.0 798.8l2 -2l2 2l-2 2z" stroke="#00ffff" fill="none" stroke-width="1"/>
<text x="494.7" y="797.9" fill="#00ffff" stroke="#00ffff" stroke-width="0.00" font-size="11.50" xml:space="preserve">s1</text>
<path d="M485.0 809.1l2 -2l2 2l-2 2z" stroke="#0000ff" fill="none" stroke-width="1"/>
<text x="494.7" y="809.3" fill="#0000ff" stroke="#0000ff" stroke-width="0.00" font-size="11.50" xml:space="preserve">sk</text>
<text x="515.6" y="713.7" fill="#ff0000" stroke="#ff0000" stroke-width="0.00" font-size="12.50" textLength="81.5" lengthAdjust="spacing" xml:space="preserve">buckling zone</text>
<text x="410.0" y="841.1" fill="#00ff00" stroke="#00ff00" stroke-width="0.00" font-size="12.50" textLength="98.6" lengthAdjust="spacing" xml:space="preserve">buckling security</text>
<text x="434.2" y="603.8" fill="#00ff00" stroke="#00ff00" stroke-width="0.00" font-size="10.50" textLength="95.4" lengthAdjust="spacing" xml:space="preserve">Buckling diagram</text>
<text x="382.5" y="593.5" fill="#ffff00" stroke="#ffff00" stroke-width="0.20" font-size="5.50" xml:space="preserve">s/L0</text>
<text x="382.5" y="869.3" fill="#ffff00" stroke="#ffff00" stroke-width="0.32" font-size="6.50" xml:space="preserve">0</text>
<text x="382.5" y="818.6" fill="#ffff00" stroke="#ffff00" stroke-width="0.32" font-size="6.50" xml:space="preserve">0.2</text>
<text x="382.5" y="767.8" fill="#ffff00" stroke="#ffff00" stroke-width="0.32" font-size="6.50" xml:space="preserve">0.4</text>
<text x="382.5" y="717.0" fill="#ffff00" stroke="#ffff00" stroke-width="0.32" font-size="6.50" xml:space="preserve">0.6</text>
<text x="382.5" y="666.2" fill="#ffff00" stroke="#ffff00" stroke-width="0.32" font-size="6.50" xml:space="preserve">0.8</text>
<text x="382.5" y="615.4" fill="#ffff00" stroke="#ffff00" stroke-width="0.32" font-size="6.50" xml:space="preserve">1</text>
<text x="398.5" y="883.9" fill="#ffff00" stroke="#ffff00" stroke-width="0.32" font-size="6.50" xml:space="preserve">0</text>
<text x="442.6" y="883.9" fill="#ffff00" stroke="#ffff00" stroke-width="0.32" font-size="6.50" xml:space="preserve">2</text>
<text x="486.7" y="883.9" fill="#ffff00" stroke="#ffff00" stroke-width="0.32" font-size="6.50" xml:space="preserve">4</text>
<text x="530.8" y="883.9" fill="#ffff00" stroke="#ffff00" stroke-width="0.32" font-size="6.50" xml:space="preserve">6</text>
<text x="574.9" y="883.9" fill="#ffff00" stroke="#ffff00" stroke-width="0.32" font-size="6.50" xml:space="preserve">8</text>
<text x="618.5" y="883.9" fill="#ffff00" stroke="#ffff00" stroke-width="0.32" font-size="6.50" xml:space="preserve">10</text>
<text x="639.5" y="883.8" fill="#ffff00" stroke="#ffff00" stroke-width="0.20" font-size="5.50" textLength="23.0" lengthAdjust="spacing" xml:space="preserve">v*L0/D</text>
<path d="M702.5 894.5 L702.5 818.5 L1231.5 818.5" stroke="#ff0000" stroke-width="3" fill="none" stroke-linejoin="round" stroke-linecap="round" stroke-linejoin="miter" stroke-linecap="butt"/>
<line x1="702.5" y1="843.5" x2="1231.5" y2="843.5" stroke="#ffff00" stroke-width="1"/>
<line x1="793.5" y1="869.5" x2="920.5" y2="869.5" stroke="#ffff00" stroke-width="1"/>
<line x1="793.5" y1="818.5" x2="793.5" y2="895.0" stroke="#ffff00" stroke-width="1"/>
<line x1="920.5" y1="818.5" x2="920.5" y2="895.0" stroke="#ffff00" stroke-width="1"/>
<line x1="1099.5" y1="818.5" x2="1099.5" y2="843.5" stroke="#ffff00" stroke-width="1"/>
<line x1="1078.5" y1="843.5" x2="1078.5" y2="895.0" stroke="#ffff00" stroke-width="1"/>
<line x1="1078.5" y1="869.5" x2="1231.5" y2="869.5" stroke="#ffff00" stroke-width="1"/>
<line x1="1102.5" y1="869.5" x2="1102.5" y2="895.0" stroke="#ffff00" stroke-width="1"/>
<line x1="1173.5" y1="869.5" x2="1173.5" y2="895.0" stroke="#ffff00" stroke-width="1"/>
<line x1="1202.5" y1="869.5" x2="1202.5" y2="895.0" stroke="#ffff00" stroke-width="1"/>
<text x="705.0" y="826.1" fill="#ffff00" stroke="#ffff00" stroke-width="0.20" font-size="5.30" textLength="43.5" lengthAdjust="spacing" style="font-style:normal" xml:space="preserve">Responsible dept.</text>
<text x="796.8" y="826.1" fill="#ffff00" stroke="#ffff00" stroke-width="0.20" font-size="5.30" textLength="49.0" lengthAdjust="spacing" style="font-style:normal" xml:space="preserve">Technical reference</text>
<text x="923.0" y="826.1" fill="#ffff00" stroke="#ffff00" stroke-width="0.20" font-size="5.30" textLength="39.5" lengthAdjust="spacing" style="font-style:normal" xml:space="preserve">Document type</text>
<text x="1102.4" y="826.1" fill="#ffff00" stroke="#ffff00" stroke-width="0.20" font-size="5.30" textLength="43.5" lengthAdjust="spacing" style="font-style:normal" xml:space="preserve">Document status</text>
<text x="796.8" y="851.1" fill="#ffff00" stroke="#ffff00" stroke-width="0.20" font-size="5.30" textLength="26.5" lengthAdjust="spacing" style="font-style:normal" xml:space="preserve">Created by</text>
<text x="923.0" y="850.9" fill="#ffff00" stroke="#ffff00" stroke-width="0.20" font-size="5.30" textLength="63.5" lengthAdjust="spacing" style="font-style:normal" xml:space="preserve">Title, Supplementary title</text>
<text x="796.3" y="876.3" fill="#ffff00" stroke="#ffff00" stroke-width="0.20" font-size="5.30" textLength="31.0" lengthAdjust="spacing" style="font-style:normal" xml:space="preserve">Approved by</text>
<text x="1080.8" y="876.3" fill="#ffff00" stroke="#ffff00" stroke-width="0.20" font-size="5.30" textLength="11.5" lengthAdjust="spacing" style="font-style:normal" xml:space="preserve">Rev.</text>
<text x="1104.6" y="876.3" fill="#ffff00" stroke="#ffff00" stroke-width="0.20" font-size="5.30" textLength="34.5" lengthAdjust="spacing" style="font-style:normal" xml:space="preserve">Date of issue</text>
<text x="1176.2" y="876.3" fill="#ffff00" stroke="#ffff00" stroke-width="0.20" font-size="5.30" textLength="13.5" lengthAdjust="spacing" style="font-style:normal" xml:space="preserve">Lang.</text>
<text x="1205.0" y="876.3" fill="#ffff00" stroke="#ffff00" stroke-width="0.20" font-size="5.30" textLength="13.0" lengthAdjust="spacing" style="font-style:normal" xml:space="preserve">Page</text>
<text x="926.8" y="866.3" fill="#ff0000" stroke="#ff0000" stroke-width="0.00" font-size="14.00" textLength="129.2" lengthAdjust="spacing" xml:space="preserve">Compression Spring</text>
<text x="1085.0" y="860.8" fill="#ff0000" stroke="#ff0000" stroke-width="0.00" font-size="14.00" textLength="97.8" lengthAdjust="spacing" xml:space="preserve">2098-4x32x120</text>
<text x="1085.0" y="887.9" fill="#00ff00" stroke="#00ff00" stroke-width="0.32" font-size="7.50" xml:space="preserve">A</text>
<text x="1108.6" y="887.9" fill="#00ff00" stroke="#00ff00" stroke-width="0.32" font-size="7.50" textLength="37.8" lengthAdjust="spacing" xml:space="preserve">2013-04-30</text>
</svg>
</body></html>
